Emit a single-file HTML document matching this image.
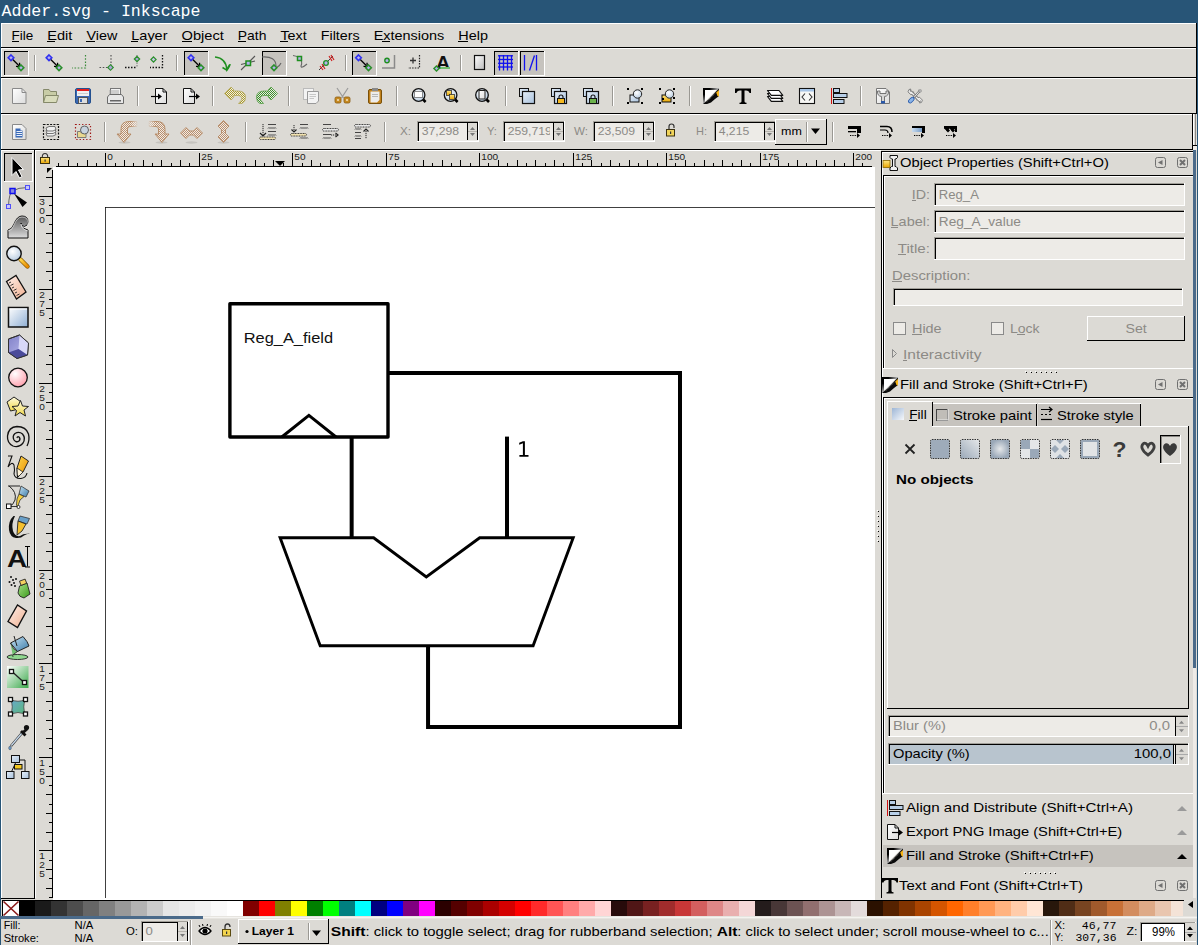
<!DOCTYPE html>
<html><head><meta charset="utf-8"><title>Adder.svg - Inkscape</title>
<style>html,body{margin:0;padding:0;background:#dcdad5;overflow:hidden;} svg{display:block;} text{white-space:pre;}</style>
</head><body>
<svg width="1198" height="945" viewBox="0 0 1198 945" shape-rendering="auto">
<rect x="0" y="0" width="1198" height="945" fill="#dcdad5" />
<rect x="0" y="0" width="1198" height="23" fill="#285577" />
<text x="1.50" y="16" font-family="Liberation Mono" font-size="16.60" fill="#fff" textLength="199.00" lengthAdjust="spacingAndGlyphs" >Adder.svg - Inkscape</text>
<rect x="0" y="23" width="1" height="922" fill="#285577" />
<rect x="1197" y="23" width="1" height="922" fill="#285577" />
<rect x="1" y="23" width="1196" height="25" fill="#dcdad5" />
<rect x="1" y="23" width="1196" height="1" fill="#fff" />
<rect x="1" y="23" width="1" height="25" fill="#fff" />
<rect x="1" y="47" width="1196" height="1" fill="#000" />
<rect x="1196" y="23" width="1" height="25" fill="#000" />
<text x="11.50" y="40" font-family="Liberation Sans" font-size="13.19" fill="#000" textLength="21.75" lengthAdjust="spacingAndGlyphs" >File</text>
<rect x="12" y="41" width="7" height="1" fill="#000" />
<text x="47.25" y="40" font-family="Liberation Sans" font-size="13.19" fill="#000" textLength="25.18" lengthAdjust="spacingAndGlyphs" >Edit</text>
<rect x="47" y="41" width="8" height="1" fill="#000" />
<text x="86.43" y="40" font-family="Liberation Sans" font-size="13.19" fill="#000" textLength="30.85" lengthAdjust="spacingAndGlyphs" >View</text>
<rect x="86" y="41" width="9" height="1" fill="#000" />
<text x="131.28" y="40" font-family="Liberation Sans" font-size="13.19" fill="#000" textLength="36.25" lengthAdjust="spacingAndGlyphs" >Layer</text>
<rect x="131" y="41" width="7" height="1" fill="#000" />
<text x="181.52" y="40" font-family="Liberation Sans" font-size="13.19" fill="#000" textLength="42.34" lengthAdjust="spacingAndGlyphs" >Object</text>
<rect x="182" y="41" width="10" height="1" fill="#000" />
<text x="237.86" y="40" font-family="Liberation Sans" font-size="13.19" fill="#000" textLength="28.56" lengthAdjust="spacingAndGlyphs" >Path</text>
<rect x="238" y="41" width="8" height="1" fill="#000" />
<text x="280.42" y="40" font-family="Liberation Sans" font-size="13.19" fill="#000" textLength="26.29" lengthAdjust="spacingAndGlyphs" >Text</text>
<rect x="280" y="41" width="8" height="1" fill="#000" />
<text x="320.72" y="40" font-family="Liberation Sans" font-size="13.19" fill="#000" textLength="38.97" lengthAdjust="spacingAndGlyphs" >Filters</text>
<rect x="353" y="41" width="7" height="1" fill="#000" />
<text x="373.69" y="40" font-family="Liberation Sans" font-size="13.19" fill="#000" textLength="70.59" lengthAdjust="spacingAndGlyphs" >Extensions</text>
<rect x="382" y="41" width="8" height="1" fill="#000" />
<text x="458.28" y="40" font-family="Liberation Sans" font-size="13.19" fill="#000" textLength="29.64" lengthAdjust="spacingAndGlyphs" >Help</text>
<rect x="458" y="41" width="10" height="1" fill="#000" />
<rect x="1" y="48" width="1196" height="30" fill="#dcdad5" />
<rect x="1" y="48" width="1196" height="1" fill="#fff" />
<rect x="1" y="48" width="1" height="30" fill="#fff" />
<rect x="1" y="77" width="1196" height="1" fill="#000" />
<rect x="1196" y="48" width="1" height="30" fill="#000" />
<rect x="1" y="78" width="1196" height="36" fill="#dcdad5" />
<rect x="1" y="78" width="1196" height="1" fill="#fff" />
<rect x="1" y="78" width="1" height="36" fill="#fff" />
<rect x="1" y="113" width="1196" height="1" fill="#000" />
<rect x="1196" y="78" width="1" height="36" fill="#000" />
<rect x="1" y="114" width="1192" height="36" fill="#dcdad5" />
<rect x="1" y="114" width="1192" height="1" fill="#fff" />
<rect x="1" y="114" width="1" height="36" fill="#fff" />
<rect x="1" y="149" width="1192" height="1" fill="#000" />
<rect x="1192" y="114" width="1" height="36" fill="#000" />
<rect x="1" y="150" width="34" height="748" fill="#dcdad5" />
<rect x="1" y="150" width="33" height="1" fill="#fff" />
<rect x="1" y="150" width="1" height="748" fill="#fff" />
<rect x="34" y="150" width="1" height="749" fill="#000" />
<rect x="1" y="898" width="34" height="1" fill="#000" />
<rect x="35" y="150" width="1" height="748" fill="#fff" />
<rect x="35" y="150" width="846" height="1" fill="#fff" />
<rect x="53" y="167" width="822" height="733" fill="#fff" />
<rect x="56" y="166" width="817" height="1" fill="#000" />
<rect x="52" y="170" width="1" height="728" fill="#000" />
<path d="M47 168 L52 168 L47 173 Z" fill="#000"/>
<rect x="58" y="163" width="1" height="3" fill="#000" />
<rect x="68" y="160" width="1" height="6" fill="#000" />
<rect x="77" y="163" width="1" height="3" fill="#000" />
<rect x="87" y="160" width="1" height="6" fill="#000" />
<rect x="96" y="163" width="1" height="3" fill="#000" />
<rect x="105" y="153" width="1" height="13" fill="#000" />
<text x="107.30" y="160" font-family="Liberation Sans" font-size="9.44" fill="#1a1a1a" textLength="5.60" lengthAdjust="spacingAndGlyphs" >0</text>
<rect x="115" y="163" width="1" height="3" fill="#000" />
<rect x="124" y="160" width="1" height="6" fill="#000" />
<rect x="133" y="163" width="1" height="3" fill="#000" />
<rect x="143" y="160" width="1" height="6" fill="#000" />
<rect x="152" y="163" width="1" height="3" fill="#000" />
<rect x="161" y="160" width="1" height="6" fill="#000" />
<rect x="171" y="163" width="1" height="3" fill="#000" />
<rect x="180" y="160" width="1" height="6" fill="#000" />
<rect x="189" y="163" width="1" height="3" fill="#000" />
<rect x="199" y="153" width="1" height="13" fill="#000" />
<text x="201.30" y="160" font-family="Liberation Sans" font-size="9.44" fill="#1a1a1a" textLength="11.20" lengthAdjust="spacingAndGlyphs" >25</text>
<rect x="208" y="163" width="1" height="3" fill="#000" />
<rect x="217" y="160" width="1" height="6" fill="#000" />
<rect x="227" y="163" width="1" height="3" fill="#000" />
<rect x="236" y="160" width="1" height="6" fill="#000" />
<rect x="245" y="163" width="1" height="3" fill="#000" />
<rect x="255" y="160" width="1" height="6" fill="#000" />
<rect x="264" y="163" width="1" height="3" fill="#000" />
<rect x="273" y="160" width="1" height="6" fill="#000" />
<rect x="283" y="163" width="1" height="3" fill="#000" />
<rect x="292" y="153" width="1" height="13" fill="#000" />
<text x="294.30" y="160" font-family="Liberation Sans" font-size="9.44" fill="#1a1a1a" textLength="11.20" lengthAdjust="spacingAndGlyphs" >50</text>
<rect x="302" y="163" width="1" height="3" fill="#000" />
<rect x="311" y="160" width="1" height="6" fill="#000" />
<rect x="320" y="163" width="1" height="3" fill="#000" />
<rect x="330" y="160" width="1" height="6" fill="#000" />
<rect x="339" y="163" width="1" height="3" fill="#000" />
<rect x="348" y="160" width="1" height="6" fill="#000" />
<rect x="358" y="163" width="1" height="3" fill="#000" />
<rect x="367" y="160" width="1" height="6" fill="#000" />
<rect x="376" y="163" width="1" height="3" fill="#000" />
<rect x="386" y="153" width="1" height="13" fill="#000" />
<text x="388.30" y="160" font-family="Liberation Sans" font-size="9.44" fill="#1a1a1a" textLength="11.20" lengthAdjust="spacingAndGlyphs" >75</text>
<rect x="395" y="163" width="1" height="3" fill="#000" />
<rect x="404" y="160" width="1" height="6" fill="#000" />
<rect x="414" y="163" width="1" height="3" fill="#000" />
<rect x="423" y="160" width="1" height="6" fill="#000" />
<rect x="432" y="163" width="1" height="3" fill="#000" />
<rect x="442" y="160" width="1" height="6" fill="#000" />
<rect x="451" y="163" width="1" height="3" fill="#000" />
<rect x="460" y="160" width="1" height="6" fill="#000" />
<rect x="470" y="163" width="1" height="3" fill="#000" />
<rect x="479" y="153" width="1" height="13" fill="#000" />
<text x="481.30" y="160" font-family="Liberation Sans" font-size="9.44" fill="#1a1a1a" textLength="16.80" lengthAdjust="spacingAndGlyphs" >100</text>
<rect x="488" y="163" width="1" height="3" fill="#000" />
<rect x="498" y="160" width="1" height="6" fill="#000" />
<rect x="507" y="163" width="1" height="3" fill="#000" />
<rect x="517" y="160" width="1" height="6" fill="#000" />
<rect x="526" y="163" width="1" height="3" fill="#000" />
<rect x="535" y="160" width="1" height="6" fill="#000" />
<rect x="545" y="163" width="1" height="3" fill="#000" />
<rect x="554" y="160" width="1" height="6" fill="#000" />
<rect x="563" y="163" width="1" height="3" fill="#000" />
<rect x="573" y="153" width="1" height="13" fill="#000" />
<text x="575.30" y="160" font-family="Liberation Sans" font-size="9.44" fill="#1a1a1a" textLength="16.80" lengthAdjust="spacingAndGlyphs" >125</text>
<rect x="582" y="163" width="1" height="3" fill="#000" />
<rect x="591" y="160" width="1" height="6" fill="#000" />
<rect x="601" y="163" width="1" height="3" fill="#000" />
<rect x="610" y="160" width="1" height="6" fill="#000" />
<rect x="619" y="163" width="1" height="3" fill="#000" />
<rect x="629" y="160" width="1" height="6" fill="#000" />
<rect x="638" y="163" width="1" height="3" fill="#000" />
<rect x="647" y="160" width="1" height="6" fill="#000" />
<rect x="657" y="163" width="1" height="3" fill="#000" />
<rect x="666" y="153" width="1" height="13" fill="#000" />
<text x="668.30" y="160" font-family="Liberation Sans" font-size="9.44" fill="#1a1a1a" textLength="16.80" lengthAdjust="spacingAndGlyphs" >150</text>
<rect x="675" y="163" width="1" height="3" fill="#000" />
<rect x="685" y="160" width="1" height="6" fill="#000" />
<rect x="694" y="163" width="1" height="3" fill="#000" />
<rect x="704" y="160" width="1" height="6" fill="#000" />
<rect x="713" y="163" width="1" height="3" fill="#000" />
<rect x="722" y="160" width="1" height="6" fill="#000" />
<rect x="732" y="163" width="1" height="3" fill="#000" />
<rect x="741" y="160" width="1" height="6" fill="#000" />
<rect x="750" y="163" width="1" height="3" fill="#000" />
<rect x="760" y="153" width="1" height="13" fill="#000" />
<text x="762.30" y="160" font-family="Liberation Sans" font-size="9.44" fill="#1a1a1a" textLength="16.80" lengthAdjust="spacingAndGlyphs" >175</text>
<rect x="769" y="163" width="1" height="3" fill="#000" />
<rect x="778" y="160" width="1" height="6" fill="#000" />
<rect x="788" y="163" width="1" height="3" fill="#000" />
<rect x="797" y="160" width="1" height="6" fill="#000" />
<rect x="806" y="163" width="1" height="3" fill="#000" />
<rect x="816" y="160" width="1" height="6" fill="#000" />
<rect x="825" y="163" width="1" height="3" fill="#000" />
<rect x="834" y="160" width="1" height="6" fill="#000" />
<rect x="844" y="163" width="1" height="3" fill="#000" />
<rect x="853" y="153" width="1" height="13" fill="#000" />
<text x="855.30" y="160" font-family="Liberation Sans" font-size="9.44" fill="#1a1a1a" textLength="16.80" lengthAdjust="spacingAndGlyphs" >200</text>
<rect x="862" y="163" width="1" height="3" fill="#000" />
<rect x="872" y="160" width="1" height="6" fill="#000" />
<rect x="46" y="177" width="6" height="1" fill="#000" />
<rect x="49" y="187" width="3" height="1" fill="#000" />
<rect x="39" y="196" width="13" height="1" fill="#000" />
<text x="39.30" y="205" font-family="Liberation Sans" font-size="9.44" fill="#1a1a1a" textLength="5.60" lengthAdjust="spacingAndGlyphs" >3</text>
<text x="39.30" y="214" font-family="Liberation Sans" font-size="9.44" fill="#1a1a1a" textLength="5.60" lengthAdjust="spacingAndGlyphs" >0</text>
<text x="39.30" y="223" font-family="Liberation Sans" font-size="9.44" fill="#1a1a1a" textLength="5.60" lengthAdjust="spacingAndGlyphs" >0</text>
<rect x="49" y="205" width="3" height="1" fill="#000" />
<rect x="46" y="215" width="6" height="1" fill="#000" />
<rect x="49" y="224" width="3" height="1" fill="#000" />
<rect x="46" y="233" width="6" height="1" fill="#000" />
<rect x="49" y="243" width="3" height="1" fill="#000" />
<rect x="46" y="252" width="6" height="1" fill="#000" />
<rect x="49" y="261" width="3" height="1" fill="#000" />
<rect x="46" y="271" width="6" height="1" fill="#000" />
<rect x="49" y="280" width="3" height="1" fill="#000" />
<rect x="39" y="289" width="13" height="1" fill="#000" />
<text x="39.30" y="298" font-family="Liberation Sans" font-size="9.44" fill="#1a1a1a" textLength="5.60" lengthAdjust="spacingAndGlyphs" >2</text>
<text x="39.30" y="307" font-family="Liberation Sans" font-size="9.44" fill="#1a1a1a" textLength="5.60" lengthAdjust="spacingAndGlyphs" >7</text>
<text x="39.30" y="316" font-family="Liberation Sans" font-size="9.44" fill="#1a1a1a" textLength="5.60" lengthAdjust="spacingAndGlyphs" >5</text>
<rect x="49" y="299" width="3" height="1" fill="#000" />
<rect x="46" y="308" width="6" height="1" fill="#000" />
<rect x="49" y="318" width="3" height="1" fill="#000" />
<rect x="46" y="327" width="6" height="1" fill="#000" />
<rect x="49" y="336" width="3" height="1" fill="#000" />
<rect x="46" y="346" width="6" height="1" fill="#000" />
<rect x="49" y="355" width="3" height="1" fill="#000" />
<rect x="46" y="364" width="6" height="1" fill="#000" />
<rect x="49" y="374" width="3" height="1" fill="#000" />
<rect x="39" y="383" width="13" height="1" fill="#000" />
<text x="39.30" y="392" font-family="Liberation Sans" font-size="9.44" fill="#1a1a1a" textLength="5.60" lengthAdjust="spacingAndGlyphs" >2</text>
<text x="39.30" y="401" font-family="Liberation Sans" font-size="9.44" fill="#1a1a1a" textLength="5.60" lengthAdjust="spacingAndGlyphs" >5</text>
<text x="39.30" y="410" font-family="Liberation Sans" font-size="9.44" fill="#1a1a1a" textLength="5.60" lengthAdjust="spacingAndGlyphs" >0</text>
<rect x="49" y="392" width="3" height="1" fill="#000" />
<rect x="46" y="402" width="6" height="1" fill="#000" />
<rect x="49" y="411" width="3" height="1" fill="#000" />
<rect x="46" y="420" width="6" height="1" fill="#000" />
<rect x="49" y="430" width="3" height="1" fill="#000" />
<rect x="46" y="439" width="6" height="1" fill="#000" />
<rect x="49" y="448" width="3" height="1" fill="#000" />
<rect x="46" y="458" width="6" height="1" fill="#000" />
<rect x="49" y="467" width="3" height="1" fill="#000" />
<rect x="39" y="476" width="13" height="1" fill="#000" />
<text x="39.30" y="485" font-family="Liberation Sans" font-size="9.44" fill="#1a1a1a" textLength="5.60" lengthAdjust="spacingAndGlyphs" >2</text>
<text x="39.30" y="494" font-family="Liberation Sans" font-size="9.44" fill="#1a1a1a" textLength="5.60" lengthAdjust="spacingAndGlyphs" >2</text>
<text x="39.30" y="503" font-family="Liberation Sans" font-size="9.44" fill="#1a1a1a" textLength="5.60" lengthAdjust="spacingAndGlyphs" >5</text>
<rect x="49" y="486" width="3" height="1" fill="#000" />
<rect x="46" y="495" width="6" height="1" fill="#000" />
<rect x="49" y="505" width="3" height="1" fill="#000" />
<rect x="46" y="514" width="6" height="1" fill="#000" />
<rect x="49" y="523" width="3" height="1" fill="#000" />
<rect x="46" y="533" width="6" height="1" fill="#000" />
<rect x="49" y="542" width="3" height="1" fill="#000" />
<rect x="46" y="551" width="6" height="1" fill="#000" />
<rect x="49" y="561" width="3" height="1" fill="#000" />
<rect x="39" y="570" width="13" height="1" fill="#000" />
<text x="39.30" y="579" font-family="Liberation Sans" font-size="9.44" fill="#1a1a1a" textLength="5.60" lengthAdjust="spacingAndGlyphs" >2</text>
<text x="39.30" y="588" font-family="Liberation Sans" font-size="9.44" fill="#1a1a1a" textLength="5.60" lengthAdjust="spacingAndGlyphs" >0</text>
<text x="39.30" y="597" font-family="Liberation Sans" font-size="9.44" fill="#1a1a1a" textLength="5.60" lengthAdjust="spacingAndGlyphs" >0</text>
<rect x="49" y="579" width="3" height="1" fill="#000" />
<rect x="46" y="589" width="6" height="1" fill="#000" />
<rect x="49" y="598" width="3" height="1" fill="#000" />
<rect x="46" y="607" width="6" height="1" fill="#000" />
<rect x="49" y="617" width="3" height="1" fill="#000" />
<rect x="46" y="626" width="6" height="1" fill="#000" />
<rect x="49" y="635" width="3" height="1" fill="#000" />
<rect x="46" y="645" width="6" height="1" fill="#000" />
<rect x="49" y="654" width="3" height="1" fill="#000" />
<rect x="39" y="663" width="13" height="1" fill="#000" />
<text x="39.30" y="672" font-family="Liberation Sans" font-size="9.44" fill="#1a1a1a" textLength="5.60" lengthAdjust="spacingAndGlyphs" >1</text>
<text x="39.30" y="681" font-family="Liberation Sans" font-size="9.44" fill="#1a1a1a" textLength="5.60" lengthAdjust="spacingAndGlyphs" >7</text>
<text x="39.30" y="690" font-family="Liberation Sans" font-size="9.44" fill="#1a1a1a" textLength="5.60" lengthAdjust="spacingAndGlyphs" >5</text>
<rect x="49" y="673" width="3" height="1" fill="#000" />
<rect x="46" y="682" width="6" height="1" fill="#000" />
<rect x="49" y="691" width="3" height="1" fill="#000" />
<rect x="46" y="701" width="6" height="1" fill="#000" />
<rect x="49" y="710" width="3" height="1" fill="#000" />
<rect x="46" y="720" width="6" height="1" fill="#000" />
<rect x="49" y="729" width="3" height="1" fill="#000" />
<rect x="46" y="738" width="6" height="1" fill="#000" />
<rect x="49" y="748" width="3" height="1" fill="#000" />
<rect x="39" y="757" width="13" height="1" fill="#000" />
<text x="39.30" y="766" font-family="Liberation Sans" font-size="9.44" fill="#1a1a1a" textLength="5.60" lengthAdjust="spacingAndGlyphs" >1</text>
<text x="39.30" y="775" font-family="Liberation Sans" font-size="9.44" fill="#1a1a1a" textLength="5.60" lengthAdjust="spacingAndGlyphs" >5</text>
<text x="39.30" y="784" font-family="Liberation Sans" font-size="9.44" fill="#1a1a1a" textLength="5.60" lengthAdjust="spacingAndGlyphs" >0</text>
<rect x="49" y="766" width="3" height="1" fill="#000" />
<rect x="46" y="776" width="6" height="1" fill="#000" />
<rect x="49" y="785" width="3" height="1" fill="#000" />
<rect x="46" y="794" width="6" height="1" fill="#000" />
<rect x="49" y="804" width="3" height="1" fill="#000" />
<rect x="46" y="813" width="6" height="1" fill="#000" />
<rect x="49" y="822" width="3" height="1" fill="#000" />
<rect x="46" y="832" width="6" height="1" fill="#000" />
<rect x="49" y="841" width="3" height="1" fill="#000" />
<rect x="39" y="850" width="13" height="1" fill="#000" />
<text x="39.30" y="859" font-family="Liberation Sans" font-size="9.44" fill="#1a1a1a" textLength="5.60" lengthAdjust="spacingAndGlyphs" >1</text>
<text x="39.30" y="868" font-family="Liberation Sans" font-size="9.44" fill="#1a1a1a" textLength="5.60" lengthAdjust="spacingAndGlyphs" >2</text>
<text x="39.30" y="877" font-family="Liberation Sans" font-size="9.44" fill="#1a1a1a" textLength="5.60" lengthAdjust="spacingAndGlyphs" >5</text>
<rect x="49" y="860" width="3" height="1" fill="#000" />
<rect x="46" y="869" width="6" height="1" fill="#000" />
<rect x="49" y="878" width="3" height="1" fill="#000" />
<rect x="46" y="888" width="6" height="1" fill="#000" />
<rect x="49" y="897" width="3" height="1" fill="#000" />
<path d="M275 161 L285 161 L280 166 Z" fill="#000"/>
<rect x="105" y="207" width="770" height="1" fill="#000" opacity="0.75"/>
<rect x="105" y="207" width="1" height="691" fill="#000" opacity="0.75"/>
<g fill="none" stroke="#000" stroke-linejoin="miter">
<path d="M351.65 437 V537.5" stroke-width="4"/>
<path d="M507 436.6 V537.5" stroke-width="4"/>
<path d="M388 373 H680 V726.9 H428.05 V645.7" stroke-width="4"/>
<rect x="229.9" y="303.8" width="158.1" height="133.2" stroke-width="3.4" stroke-linejoin="round"/>
<path d="M281.8 437 L308.9 415.3 L336 437" stroke-width="3"/>
<path d="M280.1 537.8 H373.6 L426.3 577 L479.7 537.8 H573.2 L533.1 645.7 H320.2 Z" stroke-width="2.9"/>
</g>
<text x="243.70" y="342.9" font-family="Liberation Sans" font-size="15.53" fill="#111" textLength="89.40" lengthAdjust="spacingAndGlyphs" >Reg_A_field</text>
<path d="M522.9 441.3 H524.9 V455.1 H528.5 V456.7 H519.4 V455.1 H522.9 V443.3 L519.2 444.7 V442.8 L522.9 441.3 Z" fill="#000"/>
<rect x="875" y="150" width="6" height="748" fill="#dcdad5" />
<rect x="872" y="150" width="9" height="17" fill="#dcdad5" />
<rect x="877" y="510" width="1" height="1" fill="#fff" />
<rect x="878" y="511" width="1" height="1" fill="#000" />
<rect x="877" y="515" width="1" height="1" fill="#fff" />
<rect x="878" y="516" width="1" height="1" fill="#000" />
<rect x="877" y="520" width="1" height="1" fill="#fff" />
<rect x="878" y="521" width="1" height="1" fill="#000" />
<rect x="877" y="525" width="1" height="1" fill="#fff" />
<rect x="878" y="526" width="1" height="1" fill="#000" />
<rect x="877" y="530" width="1" height="1" fill="#fff" />
<rect x="878" y="531" width="1" height="1" fill="#000" />
<rect x="877" y="535" width="1" height="1" fill="#fff" />
<rect x="878" y="536" width="1" height="1" fill="#000" />
<rect x="877" y="540" width="1" height="1" fill="#fff" />
<rect x="878" y="541" width="1" height="1" fill="#000" />
<rect x="1193" y="146" width="4" height="752" fill="#eeebe7" />
<rect x="1193" y="140" width="4" height="6" fill="#eeebe7" />
<rect x="1193" y="145" width="4" height="1" fill="#000" />
<rect x="1193" y="150" width="3" height="518" fill="#4a6a8a" />
<rect x="1196" y="150" width="1" height="748" fill="#dcdad5" />
<rect x="881" y="151" width="312" height="1" fill="#000" />
<rect x="881" y="151" width="1" height="644" fill="#000" />
<rect x="882" y="152" width="311" height="1" fill="#fff" />
<rect x="882" y="152" width="1" height="643" fill="#fff" />
<text x="900.00" y="167" font-family="Liberation Sans" font-size="13.19" fill="#000" textLength="208.80" lengthAdjust="spacingAndGlyphs" >Object Properties (Shift+Ctrl+O)</text>
<rect x="1155.5" y="157.5" width="10" height="10" rx="2" fill="none" stroke="#707070" stroke-width="1"/>
<path d="M1158 162.5 L1162.5 160 L1162.5 165 Z" fill="#707070"/>
<rect x="1177.5" y="157.5" width="10" height="10" rx="2" fill="none" stroke="#707070" stroke-width="1"/>
<path d="M1180 160 L1185 165 M1185 160 L1180 165" stroke="#707070" stroke-width="2"/>
<rect x="883" y="175" width="310" height="1" fill="#000" />
<rect x="883" y="175" width="1" height="193" fill="#000" />
<rect x="884" y="176" width="309" height="1" fill="#fff" />
<rect x="884" y="176" width="1" height="192" fill="#fff" />
<rect x="934" y="183" width="251" height="23" fill="#edebe7" />
<rect x="934" y="183" width="251" height="1" fill="#a19f99" />
<rect x="934" y="183" width="1" height="23" fill="#a19f99" />
<rect x="935" y="184" width="249" height="1" fill="#000" />
<rect x="935" y="184" width="1" height="21" fill="#000" />
<rect x="934" y="205" width="251" height="1" fill="#fff" />
<rect x="1184" y="183" width="1" height="23" fill="#fff" />
<rect x="934" y="210" width="251" height="23" fill="#edebe7" />
<rect x="934" y="210" width="251" height="1" fill="#a19f99" />
<rect x="934" y="210" width="1" height="23" fill="#a19f99" />
<rect x="935" y="211" width="249" height="1" fill="#000" />
<rect x="935" y="211" width="1" height="21" fill="#000" />
<rect x="934" y="232" width="251" height="1" fill="#fff" />
<rect x="1184" y="210" width="1" height="23" fill="#fff" />
<rect x="934" y="237" width="251" height="23" fill="#edebe7" />
<rect x="934" y="237" width="251" height="1" fill="#a19f99" />
<rect x="934" y="237" width="1" height="23" fill="#a19f99" />
<rect x="935" y="238" width="249" height="1" fill="#000" />
<rect x="935" y="238" width="1" height="21" fill="#000" />
<rect x="934" y="259" width="251" height="1" fill="#fff" />
<rect x="1184" y="237" width="1" height="23" fill="#fff" />
<text x="911.78" y="199" font-family="Liberation Sans" font-size="13.19" fill="#8c8a86" textLength="18.22" lengthAdjust="spacingAndGlyphs" >ID:</text>
<text x="890.55" y="226" font-family="Liberation Sans" font-size="13.19" fill="#8c8a86" textLength="39.45" lengthAdjust="spacingAndGlyphs" >Label:</text>
<text x="897.76" y="253" font-family="Liberation Sans" font-size="13.19" fill="#8c8a86" textLength="32.24" lengthAdjust="spacingAndGlyphs" >Title:</text>
<text x="938.80" y="199" font-family="Liberation Sans" font-size="13.19" fill="#8c8a86" textLength="40.09" lengthAdjust="spacingAndGlyphs" >Reg_A</text>
<text x="938.80" y="226" font-family="Liberation Sans" font-size="13.19" fill="#8c8a86" textLength="82.10" lengthAdjust="spacingAndGlyphs" >Reg_A_value</text>
<text x="892.00" y="280" font-family="Liberation Sans" font-size="13.19" fill="#8c8a86" textLength="78.42" lengthAdjust="spacingAndGlyphs" >Description:</text>
<rect x="893" y="288" width="290" height="18" fill="#edebe7" />
<rect x="893" y="288" width="290" height="1" fill="#a19f99" />
<rect x="893" y="288" width="1" height="18" fill="#a19f99" />
<rect x="894" y="289" width="288" height="1" fill="#000" />
<rect x="894" y="289" width="1" height="16" fill="#000" />
<rect x="893" y="305" width="290" height="1" fill="#fff" />
<rect x="1182" y="288" width="1" height="18" fill="#fff" />
<rect x="893.5" y="322.5" width="12" height="12" fill="#edebe7" stroke="#8a8a8a" stroke-width="1"/>
<rect x="991.5" y="322.5" width="12" height="12" fill="#edebe7" stroke="#8a8a8a" stroke-width="1"/>
<text x="912.00" y="333" font-family="Liberation Sans" font-size="13.19" fill="#8c8a86" textLength="29.64" lengthAdjust="spacingAndGlyphs" >Hide</text>
<text x="1010.00" y="333" font-family="Liberation Sans" font-size="13.19" fill="#8c8a86" textLength="29.64" lengthAdjust="spacingAndGlyphs" >Lock</text>
<path d="M892.5 349.5 L896.5 353.5 L892.5 357.5 Z" fill="none" stroke="#8a8a8a" stroke-width="1"/>
<text x="903.00" y="359" font-family="Liberation Sans" font-size="13.19" fill="#8c8a86" textLength="78.43" lengthAdjust="spacingAndGlyphs" >Interactivity</text>
<rect x="912" y="200" width="4" height="1" fill="#8c8a86" />
<rect x="891" y="227" width="7" height="1" fill="#8c8a86" />
<rect x="898" y="254" width="8" height="1" fill="#8c8a86" />
<rect x="892" y="281" width="10" height="1" fill="#8c8a86" />
<rect x="912" y="334" width="10" height="1" fill="#8c8a86" />
<rect x="1017" y="334" width="8" height="1" fill="#8c8a86" />
<rect x="903" y="360" width="4" height="1" fill="#8c8a86" />
<rect x="1125" y="334" width="8" height="1" fill="#8c8a86" />
<rect x="1087" y="316" width="98" height="25" fill="#dcdad5" />
<rect x="1087" y="316" width="98" height="1" fill="#fff" />
<rect x="1087" y="316" width="1" height="25" fill="#fff" />
<rect x="1087" y="340" width="98" height="1" fill="#000" />
<rect x="1184" y="316" width="1" height="25" fill="#000" />
<text x="1125.40" y="333" font-family="Liberation Sans" font-size="13.19" fill="#8c8a86" textLength="21.35" lengthAdjust="spacingAndGlyphs" >Set</text>
<rect x="882" y="368" width="311" height="1" fill="#fff" />
<rect x="1025" y="371" width="1" height="1" fill="#fff" />
<rect x="1026" y="372" width="1" height="1" fill="#000" />
<rect x="1030" y="371" width="1" height="1" fill="#fff" />
<rect x="1031" y="372" width="1" height="1" fill="#000" />
<rect x="1035" y="371" width="1" height="1" fill="#fff" />
<rect x="1036" y="372" width="1" height="1" fill="#000" />
<rect x="1040" y="371" width="1" height="1" fill="#fff" />
<rect x="1041" y="372" width="1" height="1" fill="#000" />
<rect x="1045" y="371" width="1" height="1" fill="#fff" />
<rect x="1046" y="372" width="1" height="1" fill="#000" />
<rect x="1050" y="371" width="1" height="1" fill="#fff" />
<rect x="1051" y="372" width="1" height="1" fill="#000" />
<rect x="1055" y="371" width="1" height="1" fill="#fff" />
<rect x="1056" y="372" width="1" height="1" fill="#000" />
<text x="900.00" y="389" font-family="Liberation Sans" font-size="13.19" fill="#000" textLength="187.74" lengthAdjust="spacingAndGlyphs" >Fill and Stroke (Shift+Ctrl+F)</text>
<rect x="1155.5" y="379.5" width="10" height="10" rx="2" fill="none" stroke="#707070" stroke-width="1"/>
<path d="M1158 384.5 L1162.5 382 L1162.5 387 Z" fill="#707070"/>
<rect x="1177.5" y="379.5" width="10" height="10" rx="2" fill="none" stroke="#707070" stroke-width="1"/>
<path d="M1180 382 L1185 387 M1185 382 L1180 387" stroke="#707070" stroke-width="2"/>
<rect x="883" y="397" width="310" height="1" fill="#000" />
<rect x="883" y="397" width="1" height="396" fill="#000" />
<rect x="884" y="398" width="309" height="1" fill="#fff" />
<rect x="884" y="398" width="1" height="395" fill="#fff" />
<rect x="933" y="403" width="104" height="1" fill="#fff" />
<rect x="933" y="404" width="104" height="22" fill="#c6c3be" />
<rect x="1036" y="404" width="1" height="22" fill="#000" />
<rect x="1038" y="403" width="103" height="1" fill="#fff" />
<rect x="1038" y="404" width="103" height="22" fill="#c6c3be" />
<rect x="1140" y="404" width="1" height="22" fill="#000" />
<rect x="887" y="401" width="45" height="1" fill="#fff" />
<rect x="887" y="401" width="1" height="307" fill="#fff" />
<rect x="932" y="402" width="1" height="24" fill="#000" />
<rect x="932" y="426" width="257" height="1" fill="#fff" />
<rect x="1188" y="426" width="1" height="283" fill="#000" />
<rect x="887" y="708" width="302" height="1" fill="#000" />
<defs><linearGradient id="gfill" x1="0" y1="0" x2="1" y2="1"><stop offset="0" stop-color="#9db6d6"/><stop offset="1" stop-color="#f6f8fb"/></linearGradient><pattern id="dith" width="2" height="2" patternUnits="userSpaceOnUse"><rect width="2" height="2" fill="#dcdad5"/><rect width="1" height="1" fill="#222"/><rect x="1" y="1" width="1" height="1" fill="#222"/></pattern></defs>
<rect x="892" y="408" width="12" height="12" fill="url(#gfill)" />
<text x="909.30" y="419" font-family="Liberation Sans" font-size="13.19" fill="#000" textLength="17.37" lengthAdjust="spacingAndGlyphs" >Fill</text>
<rect x="909" y="420" width="8" height="1" fill="#000" />
<rect x="936.5" y="409.5" width="11" height="11" fill="#c0bdb8" stroke="#444" stroke-width="1"/>
<path d="M937 420 H948 V409" stroke="#eee" stroke-width="1" fill="none"/>
<text x="953.00" y="420" font-family="Liberation Sans" font-size="13.19" fill="#000" textLength="78.73" lengthAdjust="spacingAndGlyphs" >Stroke paint</text>
<g stroke="#000" stroke-width="1.2" fill="none"><path d="M1041 409.5 H1052 M1049 407 L1052 409.5 L1049 412"/><path d="M1041 414.5 H1043 M1045 414.5 H1047 M1049 414.5 H1051"/><path d="M1041 419.5 H1052"/></g>
<text x="1057.00" y="420" font-family="Liberation Sans" font-size="13.19" fill="#000" textLength="76.73" lengthAdjust="spacingAndGlyphs" >Stroke style</text>
<path d="M905.5 444.5 L914.5 453.5 M914.5 444.5 L905.5 453.5" stroke="#222" stroke-width="1.8"/>
<rect x="930.5" y="439.5" width="19" height="19" rx="1.5" fill="#9eabba" stroke="#333" stroke-width="1" stroke-dasharray="1.5 1"/>
<defs><linearGradient id="lg960" x1="0" y1="1" x2="1" y2="0"><stop offset="0" stop-color="#9aa8b8"/><stop offset="1" stop-color="#e6e8ea"/></linearGradient></defs>
<rect x="960.5" y="439.5" width="19" height="19" rx="1.5" fill="url(#lg960)" stroke="#333" stroke-width="1" stroke-dasharray="1.5 1"/>
<defs><radialGradient id="rg990"><stop offset="0" stop-color="#e6e8ea"/><stop offset="1" stop-color="#9aa8b8"/></radialGradient></defs>
<rect x="990.5" y="439.5" width="19" height="19" rx="1.5" fill="url(#rg990)" stroke="#333" stroke-width="1" stroke-dasharray="1.5 1"/>
<rect x="1020.5" y="439.5" width="19" height="19" rx="1.5" fill="#e4e6e8" stroke="#333" stroke-width="1" stroke-dasharray="1.5 1"/>
<rect x="1021" y="440" width="9" height="9" fill="#9aa8b8" />
<rect x="1030" y="449" width="9" height="9" fill="#9aa8b8" />
<rect x="1050.5" y="439.5" width="19" height="19" rx="1.5" fill="#dfe2e5" stroke="#333" stroke-width="1" stroke-dasharray="1.5 1"/>
<path d="M1051 449 L1055 445 L1059 449 L1055 453 Z M1061 449 L1065 445 L1069 449 L1065 453 Z M1056 440 L1060 444 L1064 440 Z M1056 458 L1060 454 L1064 458 Z" fill="#9aa8b8"/>
<rect x="1080.5" y="439.5" width="19" height="19" rx="1.5" fill="#9aa8b8" stroke="#333" stroke-width="1" stroke-dasharray="1.5 1"/>
<rect x="1083" y="442" width="14" height="14" fill="#e2e4e6" />
<text x="1112.5" y="456.5" font-family="Liberation Sans" font-weight="bold" font-size="22" fill="#3a3a3a" textLength="14" lengthAdjust="spacingAndGlyphs">?</text>
<path d="M1148 455 C1141 450 1141 446 1143 444 C1145 442 1147 444 1148 446 C1149 444 1151 442 1153 444 C1155 446 1155 450 1148 455 Z" fill="none" stroke="#404040" stroke-width="2.8"/>
<rect x="1160" y="435" width="21" height="29" fill="#dcdad5" />
<rect x="1160" y="435" width="21" height="1" fill="#000" />
<rect x="1160" y="435" width="1" height="29" fill="#000" />
<rect x="1161" y="436" width="19" height="1" fill="#8a8884" />
<rect x="1161" y="436" width="1" height="27" fill="#8a8884" />
<rect x="1160" y="463" width="21" height="1" fill="#fff" />
<rect x="1180" y="435" width="1" height="29" fill="#fff" />
<path d="M1170 456 C1163 451 1162 447 1164 444.5 C1166 442 1169 443.5 1170 446 C1171 443.5 1174 442 1176 444.5 C1178 447 1177 451 1170 456 Z" fill="#3a3a3a"/>
<text x="896.00" y="484" font-family="Liberation Sans" font-size="13.19" fill="#000" font-weight="bold" textLength="77.51" lengthAdjust="spacingAndGlyphs" >No objects</text>
<rect x="888" y="715" width="301" height="22" fill="#edebe7" />
<rect x="888" y="715" width="301" height="1" fill="#a19f99" />
<rect x="888" y="715" width="1" height="22" fill="#a19f99" />
<rect x="889" y="716" width="299" height="1" fill="#000" />
<rect x="889" y="716" width="1" height="20" fill="#000" />
<rect x="888" y="736" width="301" height="1" fill="#fff" />
<rect x="1188" y="715" width="1" height="22" fill="#fff" />
<rect x="1175" y="717" width="13" height="19" fill="#dcdad5" />
<rect x="1175" y="717" width="1" height="19" fill="#000" />
<path d="M1179 723.75 L1181.5 720.75 L1184 723.75 Z" fill="#888"/>
<path d="M1179 729.25 L1181.5 732.25 L1184 729.25 Z" fill="#888"/>
<rect x="1176" y="726" width="12" height="1" fill="#aaa" />
<text x="893.00" y="730" font-family="Liberation Sans" font-size="13.19" fill="#8c8a86" textLength="52.74" lengthAdjust="spacingAndGlyphs" >Blur (%)</text>
<text x="1149.32" y="730" font-family="Liberation Sans" font-size="13.19" fill="#8c8a86" textLength="20.68" lengthAdjust="spacingAndGlyphs" >0,0</text>
<rect x="888" y="743" width="301" height="22" fill="#edebe7" />
<rect x="888" y="743" width="301" height="1" fill="#a19f99" />
<rect x="888" y="743" width="1" height="22" fill="#a19f99" />
<rect x="889" y="744" width="299" height="1" fill="#000" />
<rect x="889" y="744" width="1" height="20" fill="#000" />
<rect x="888" y="764" width="301" height="1" fill="#fff" />
<rect x="1188" y="743" width="1" height="22" fill="#fff" />
<rect x="890" y="745" width="283" height="19" fill="#b8c4ce" />
<rect x="1173" y="745" width="1" height="19" fill="#000" />
<rect x="1175" y="745" width="13" height="19" fill="#dcdad5" />
<rect x="1175" y="745" width="1" height="19" fill="#000" />
<path d="M1179 751.75 L1181.5 748.75 L1184 751.75 Z" fill="#888"/>
<path d="M1179 757.25 L1181.5 760.25 L1184 757.25 Z" fill="#888"/>
<rect x="1176" y="754" width="12" height="1" fill="#aaa" />
<text x="893.00" y="758" font-family="Liberation Sans" font-size="13.19" fill="#000" textLength="76.63" lengthAdjust="spacingAndGlyphs" >Opacity (%)</text>
<text x="1133.78" y="758" font-family="Liberation Sans" font-size="13.19" fill="#000" textLength="37.22" lengthAdjust="spacingAndGlyphs" >100,0</text>
<rect x="882" y="793" width="311" height="1" fill="#fff" />
<rect x="883" y="845" width="310" height="22" fill="#c6c3be" />
<text x="906.00" y="812" font-family="Liberation Sans" font-size="13.19" fill="#000" textLength="227.00" lengthAdjust="spacingAndGlyphs" >Align and Distribute (Shift+Ctrl+A)</text>
<text x="906.00" y="836" font-family="Liberation Sans" font-size="13.19" fill="#000" textLength="216.13" lengthAdjust="spacingAndGlyphs" >Export PNG Image (Shift+Ctrl+E)</text>
<text x="906.00" y="860" font-family="Liberation Sans" font-size="13.19" fill="#000" textLength="187.74" lengthAdjust="spacingAndGlyphs" >Fill and Stroke (Shift+Ctrl+F)</text>
<path d="M1177 811 L1182 806 L1187 811 Z" fill="#9a9a9a"/>
<path d="M1177 835 L1182 830 L1187 835 Z" fill="#9a9a9a"/>
<path d="M1177 859 L1182 854 L1187 859 Z" fill="#000"/>
<rect x="1024" y="872" width="1" height="1" fill="#fff" />
<rect x="1025" y="873" width="1" height="1" fill="#000" />
<rect x="1029" y="872" width="1" height="1" fill="#fff" />
<rect x="1030" y="873" width="1" height="1" fill="#000" />
<rect x="1034" y="872" width="1" height="1" fill="#fff" />
<rect x="1035" y="873" width="1" height="1" fill="#000" />
<rect x="1039" y="872" width="1" height="1" fill="#fff" />
<rect x="1040" y="873" width="1" height="1" fill="#000" />
<rect x="1044" y="872" width="1" height="1" fill="#fff" />
<rect x="1045" y="873" width="1" height="1" fill="#000" />
<rect x="1049" y="872" width="1" height="1" fill="#fff" />
<rect x="1050" y="873" width="1" height="1" fill="#000" />
<rect x="1054" y="872" width="1" height="1" fill="#fff" />
<rect x="1055" y="873" width="1" height="1" fill="#000" />
<text x="899.00" y="890" font-family="Liberation Sans" font-size="13.19" fill="#000" textLength="184.00" lengthAdjust="spacingAndGlyphs" >Text and Font (Shift+Ctrl+T)</text>
<rect x="1155.5" y="880.5" width="10" height="10" rx="2" fill="none" stroke="#707070" stroke-width="1"/>
<path d="M1158 885.5 L1162.5 883 L1162.5 888 Z" fill="#707070"/>
<rect x="1177.5" y="880.5" width="10" height="10" rx="2" fill="none" stroke="#707070" stroke-width="1"/>
<path d="M1180 883 L1185 888 M1185 883 L1180 888" stroke="#707070" stroke-width="2"/>
<rect x="1" y="900" width="1196" height="16" fill="#dcdad5" />
<rect x="2" y="900" width="1182" height="1" fill="#000" />
<rect x="2" y="900" width="1" height="16" fill="#000" />
<rect x="3" y="901" width="16" height="15" fill="#fff"/>
<path d="M3.5 901.5 L18.5 915.5 M18.5 901.5 L3.5 915.5" stroke="#8b1a1a" stroke-width="1.6"/>
<rect x="19" y="901" width="16" height="15" fill="#000000" />
<rect x="35" y="901" width="16" height="15" fill="#1a1a1a" />
<rect x="51" y="901" width="16" height="15" fill="#333333" />
<rect x="67" y="901" width="16" height="15" fill="#4d4d4d" />
<rect x="83" y="901" width="16" height="15" fill="#666666" />
<rect x="99" y="901" width="16" height="15" fill="#808080" />
<rect x="115" y="901" width="16" height="15" fill="#999999" />
<rect x="131" y="901" width="16" height="15" fill="#b3b3b3" />
<rect x="147" y="901" width="16" height="15" fill="#cccccc" />
<rect x="163" y="901" width="16" height="15" fill="#e6e6e6" />
<rect x="179" y="901" width="16" height="15" fill="#ececec" />
<rect x="195" y="901" width="16" height="15" fill="#f2f2f2" />
<rect x="211" y="901" width="16" height="15" fill="#f9f9f9" />
<rect x="227" y="901" width="16" height="15" fill="#ffffff" />
<rect x="243" y="901" width="16" height="15" fill="#800000" />
<rect x="259" y="901" width="16" height="15" fill="#ff0000" />
<rect x="275" y="901" width="16" height="15" fill="#808000" />
<rect x="291" y="901" width="16" height="15" fill="#ffff00" />
<rect x="307" y="901" width="16" height="15" fill="#008000" />
<rect x="323" y="901" width="16" height="15" fill="#00ff00" />
<rect x="339" y="901" width="16" height="15" fill="#008080" />
<rect x="355" y="901" width="16" height="15" fill="#00ffff" />
<rect x="371" y="901" width="16" height="15" fill="#000080" />
<rect x="387" y="901" width="16" height="15" fill="#0000ff" />
<rect x="403" y="901" width="16" height="15" fill="#800080" />
<rect x="419" y="901" width="16" height="15" fill="#ff00ff" />
<rect x="435" y="901" width="16" height="15" fill="#2b0000" />
<rect x="451" y="901" width="16" height="15" fill="#550000" />
<rect x="467" y="901" width="16" height="15" fill="#800000" />
<rect x="483" y="901" width="16" height="15" fill="#aa0000" />
<rect x="499" y="901" width="16" height="15" fill="#d40000" />
<rect x="515" y="901" width="16" height="15" fill="#ff0000" />
<rect x="531" y="901" width="16" height="15" fill="#ff2a2a" />
<rect x="547" y="901" width="16" height="15" fill="#ff5555" />
<rect x="563" y="901" width="16" height="15" fill="#ff8080" />
<rect x="579" y="901" width="16" height="15" fill="#ffaaaa" />
<rect x="595" y="901" width="16" height="15" fill="#ffd5d5" />
<rect x="611" y="901" width="16" height="15" fill="#280b0b" />
<rect x="627" y="901" width="16" height="15" fill="#501616" />
<rect x="643" y="901" width="16" height="15" fill="#782121" />
<rect x="659" y="901" width="16" height="15" fill="#a02c2c" />
<rect x="675" y="901" width="16" height="15" fill="#c83737" />
<rect x="691" y="901" width="16" height="15" fill="#d35f5f" />
<rect x="707" y="901" width="16" height="15" fill="#de8787" />
<rect x="723" y="901" width="16" height="15" fill="#e9afaf" />
<rect x="739" y="901" width="16" height="15" fill="#f4d7d7" />
<rect x="755" y="901" width="16" height="15" fill="#241c1c" />
<rect x="771" y="901" width="16" height="15" fill="#483737" />
<rect x="787" y="901" width="16" height="15" fill="#6c5353" />
<rect x="803" y="901" width="16" height="15" fill="#916f6f" />
<rect x="819" y="901" width="16" height="15" fill="#ac9393" />
<rect x="835" y="901" width="16" height="15" fill="#c8b7b7" />
<rect x="851" y="901" width="16" height="15" fill="#e3dbdb" />
<rect x="867" y="901" width="16" height="15" fill="#2b1100" />
<rect x="883" y="901" width="16" height="15" fill="#552200" />
<rect x="899" y="901" width="16" height="15" fill="#803300" />
<rect x="915" y="901" width="16" height="15" fill="#aa4400" />
<rect x="931" y="901" width="16" height="15" fill="#d45500" />
<rect x="947" y="901" width="16" height="15" fill="#ff6600" />
<rect x="963" y="901" width="16" height="15" fill="#ff7f2a" />
<rect x="979" y="901" width="16" height="15" fill="#ff9955" />
<rect x="995" y="901" width="16" height="15" fill="#ffb380" />
<rect x="1011" y="901" width="16" height="15" fill="#ffccaa" />
<rect x="1027" y="901" width="16" height="15" fill="#ffe6d5" />
<rect x="1043" y="901" width="16" height="15" fill="#28170b" />
<rect x="1059" y="901" width="16" height="15" fill="#502d16" />
<rect x="1075" y="901" width="16" height="15" fill="#784421" />
<rect x="1091" y="901" width="16" height="15" fill="#a05a2c" />
<rect x="1107" y="901" width="16" height="15" fill="#c87137" />
<rect x="1123" y="901" width="16" height="15" fill="#d38d5f" />
<rect x="1139" y="901" width="16" height="15" fill="#deaa87" />
<rect x="1155" y="901" width="16" height="15" fill="#e9c6af" />
<rect x="1171" y="901" width="12" height="15" fill="#f4e3d7" />
<path d="M1188 904.5 L1193 901 L1193 908 Z" fill="#000"/>
<rect x="203" y="916" width="994" height="3" fill="#e6e4df" />
<rect x="203" y="917" width="994" height="1" fill="#f4f3f0" />
<rect x="0" y="916" width="203" height="3" fill="#4a6a8a" />
<rect x="881" y="151" width="1" height="747" fill="#000" />
<rect x="883" y="175" width="1" height="193" fill="#000" />
<rect x="883" y="397" width="1" height="396" fill="#000" />
<rect x="1" y="919" width="1196" height="26" fill="#dcdad5" />
<text x="3.70" y="929" font-family="Liberation Sans" font-size="10.15" fill="#000" textLength="16.73" lengthAdjust="spacingAndGlyphs" >Fill:</text>
<text x="3.70" y="941.5" font-family="Liberation Sans" font-size="10.15" fill="#000" textLength="35.24" lengthAdjust="spacingAndGlyphs" >Stroke:</text>
<text x="74.50" y="929" font-family="Liberation Sans" font-size="10.76" fill="#000" textLength="18.80" lengthAdjust="spacingAndGlyphs" >N/A</text>
<text x="74.50" y="941.5" font-family="Liberation Sans" font-size="10.76" fill="#000" textLength="18.80" lengthAdjust="spacingAndGlyphs" >N/A</text>
<text x="126.00" y="935" font-family="Liberation Sans" font-size="11.67" fill="#000" textLength="12.00" lengthAdjust="spacingAndGlyphs" >O:</text>
<rect x="141" y="921" width="48" height="21" fill="#edebe7" />
<rect x="141" y="921" width="48" height="1" fill="#a19f99" />
<rect x="141" y="921" width="1" height="21" fill="#a19f99" />
<rect x="142" y="922" width="46" height="1" fill="#000" />
<rect x="142" y="922" width="1" height="19" fill="#000" />
<rect x="141" y="941" width="48" height="1" fill="#fff" />
<rect x="188" y="921" width="1" height="21" fill="#fff" />
<text x="145.50" y="935" font-family="Liberation Sans" font-size="11.67" fill="#8c8a86" textLength="7.32" lengthAdjust="spacingAndGlyphs" >0</text>
<rect x="191" y="920" width="1" height="25" fill="#fff" />
<rect x="190" y="920" width="1" height="25" fill="#9a9893" />
<g><path d="M199 931 Q205 924 211 931 Q205 938 199 931 Z" fill="#fff" stroke="#000" stroke-width="1.3"/><circle cx="205" cy="931" r="2.6" fill="#000"/><path d="M200 927 L199 925 M203 926 L202.5 924 M207 926 L207.5 924 M210 927 L211 925" stroke="#000" stroke-width="1"/></g>
<g><path d="M225 930 V927 Q225 924 227.5 924 Q230 924 230 927" fill="none" stroke="#333" stroke-width="1.3"/><rect x="222.5" y="929.5" width="8" height="6.5" fill="#f3d54e" stroke="#5a4a10" stroke-width="1"/><rect x="226" y="931.5" width="1.2" height="2.5" fill="#333"/></g>
<rect x="238" y="919" width="91" height="25" fill="#dcdad5" />
<rect x="238" y="919" width="91" height="1" fill="#fff" />
<rect x="238" y="919" width="1" height="25" fill="#fff" />
<rect x="238" y="943" width="91" height="1" fill="#000" />
<rect x="328" y="919" width="1" height="25" fill="#000" />
<circle cx="247" cy="931.5" r="1.6" fill="#000"/>
<text x="251.70" y="935" font-family="Liberation Sans" font-size="10.56" fill="#000" font-weight="bold" textLength="42.30" lengthAdjust="spacingAndGlyphs" >Layer 1</text>
<rect x="308" y="923" width="1" height="17" fill="#9a9893" />
<rect x="309" y="923" width="1" height="17" fill="#fff" />
<path d="M312 930.5 L321 930.5 L316.5 936 Z" fill="#000"/>
<text x="330.80" y="936" font-family="Liberation Sans" font-size="13.19" fill="#000" font-weight="bold" textLength="34.64" lengthAdjust="spacingAndGlyphs" >Shift</text>
<text x="365.44" y="936" font-family="Liberation Sans" font-size="13.19" fill="#000" textLength="351.39" lengthAdjust="spacingAndGlyphs" >: click to toggle select; drag for rubberband selection; </text>
<text x="716.82" y="936" font-family="Liberation Sans" font-size="13.19" fill="#000" font-weight="bold" textLength="20.55" lengthAdjust="spacingAndGlyphs" >Alt</text>
<text x="737.38" y="936" font-family="Liberation Sans" font-size="13.19" fill="#000" textLength="311.42" lengthAdjust="spacingAndGlyphs" >: click to select under; scroll mouse-wheel to c...</text>
<rect x="1050" y="920" width="1" height="25" fill="#9a9893" />
<rect x="1051" y="920" width="1" height="25" fill="#fff" />
<text x="1054.50" y="929" font-family="Liberation Sans" font-size="10.66" fill="#000" textLength="10.73" lengthAdjust="spacingAndGlyphs" >X:</text>
<text x="1054.50" y="941.4" font-family="Liberation Sans" font-size="10.66" fill="#000" textLength="8.56" lengthAdjust="spacingAndGlyphs" >Y:</text>
<text x="1081.80" y="929" font-family="Liberation Mono" font-size="11.50" fill="#000" textLength="34.70" lengthAdjust="spacingAndGlyphs" >46,77</text>
<text x="1075.50" y="941.4" font-family="Liberation Mono" font-size="11.50" fill="#000" textLength="41.00" lengthAdjust="spacingAndGlyphs" >307,36</text>
<text x="1126.40" y="935" font-family="Liberation Sans" font-size="11.67" fill="#000" textLength="11.00" lengthAdjust="spacingAndGlyphs" >Z:</text>
<rect x="1140" y="922" width="56" height="20" fill="#fff" />
<rect x="1140" y="922" width="56" height="1" fill="#a19f99" />
<rect x="1140" y="922" width="1" height="20" fill="#a19f99" />
<rect x="1141" y="923" width="54" height="1" fill="#000" />
<rect x="1141" y="923" width="1" height="18" fill="#000" />
<rect x="1140" y="941" width="56" height="1" fill="#fff" />
<rect x="1195" y="922" width="1" height="20" fill="#fff" />
<rect x="1184" y="923" width="12" height="18" fill="#dcdad5" />
<rect x="1184" y="923" width="1" height="18" fill="#000" />
<path d="M1187 930 L1190 926.5 L1193 930 Z" fill="#000"/><path d="M1187 934 L1190 937.5 L1193 934 Z" fill="#000"/>
<rect x="1185" y="932" width="11" height="1" fill="#aaa" />
<text x="1152.00" y="936" font-family="Liberation Sans" font-size="13.19" fill="#000" textLength="23.00" lengthAdjust="spacingAndGlyphs" >99%</text>
<rect x="384" y="122" width="1" height="20" fill="#9a9893" />
<rect x="385" y="122" width="1" height="20" fill="#fff" />
<rect x="177" y="922" width="11" height="19" fill="#dcdad5" />
<rect x="177" y="922" width="1" height="19" fill="#000" />
<rect x="187" y="922" width="1" height="19" fill="#000" />
<path d="M180 929 L182.5 926 L185 929 Z" fill="#777"/>
<path d="M180 934 L182.5 937 L185 934 Z" fill="#777"/>
<rect x="178" y="931" width="9" height="1" fill="#b5b2ac" />
<text x="400.00" y="135" font-family="Liberation Sans" font-size="10.83" fill="#8c8a86" textLength="11.00" lengthAdjust="spacingAndGlyphs" >X:</text>
<rect x="417" y="121" width="62" height="21" fill="#edebe7" />
<rect x="417" y="121" width="62" height="1" fill="#a19f99" />
<rect x="417" y="121" width="1" height="21" fill="#a19f99" />
<rect x="418" y="122" width="60" height="1" fill="#000" />
<rect x="418" y="122" width="1" height="19" fill="#000" />
<rect x="417" y="141" width="62" height="1" fill="#fff" />
<rect x="478" y="121" width="1" height="21" fill="#fff" />
<text x="421.70" y="135" font-family="Liberation Sans" font-size="10.83" fill="#8c8a86" textLength="37.34" lengthAdjust="spacingAndGlyphs" >37,298</text>
<rect x="467" y="123" width="11" height="17" fill="#dcdad5" />
<rect x="467" y="123" width="1" height="17" fill="#000" />
<rect x="477" y="123" width="1" height="17" fill="#000" />
<path d="M470 130 L472.5 127 L475 130 Z" fill="#777"/>
<path d="M470 133 L472.5 136 L475 133 Z" fill="#777"/>
<rect x="468" y="131" width="9" height="1" fill="#b5b2ac" />
<text x="487.00" y="135" font-family="Liberation Sans" font-size="10.83" fill="#8c8a86" textLength="10.00" lengthAdjust="spacingAndGlyphs" >Y:</text>
<rect x="503" y="121" width="62" height="21" fill="#edebe7" />
<rect x="503" y="121" width="62" height="1" fill="#a19f99" />
<rect x="503" y="121" width="1" height="21" fill="#a19f99" />
<rect x="504" y="122" width="60" height="1" fill="#000" />
<rect x="504" y="122" width="1" height="19" fill="#000" />
<rect x="503" y="141" width="62" height="1" fill="#fff" />
<rect x="564" y="121" width="1" height="21" fill="#fff" />
<defs><clipPath id="clipY"><rect x="505" y="120" width="45" height="22"/></clipPath></defs>
<text x="507.70" y="135" font-family="Liberation Sans" font-size="10.83" fill="#8c8a86" textLength="44.12" lengthAdjust="spacingAndGlyphs" clip-path="url(#clipY)">259,719</text>
<rect x="553" y="123" width="11" height="17" fill="#dcdad5" />
<rect x="553" y="123" width="1" height="17" fill="#000" />
<rect x="563" y="123" width="1" height="17" fill="#000" />
<path d="M556 130 L558.5 127 L561 130 Z" fill="#777"/>
<path d="M556 133 L558.5 136 L561 133 Z" fill="#777"/>
<rect x="554" y="131" width="9" height="1" fill="#b5b2ac" />
<text x="574.00" y="135" font-family="Liberation Sans" font-size="10.83" fill="#8c8a86" textLength="14.00" lengthAdjust="spacingAndGlyphs" >W:</text>
<rect x="593" y="121" width="62" height="21" fill="#edebe7" />
<rect x="593" y="121" width="62" height="1" fill="#a19f99" />
<rect x="593" y="121" width="1" height="21" fill="#a19f99" />
<rect x="594" y="122" width="60" height="1" fill="#000" />
<rect x="594" y="122" width="1" height="19" fill="#000" />
<rect x="593" y="141" width="62" height="1" fill="#fff" />
<rect x="654" y="121" width="1" height="21" fill="#fff" />
<text x="597.70" y="135" font-family="Liberation Sans" font-size="10.83" fill="#8c8a86" textLength="37.34" lengthAdjust="spacingAndGlyphs" >23,509</text>
<rect x="643" y="123" width="11" height="17" fill="#dcdad5" />
<rect x="643" y="123" width="1" height="17" fill="#000" />
<rect x="653" y="123" width="1" height="17" fill="#000" />
<path d="M646 130 L648.5 127 L651 130 Z" fill="#777"/>
<path d="M646 133 L648.5 136 L651 133 Z" fill="#777"/>
<rect x="644" y="131" width="9" height="1" fill="#b5b2ac" />
<text x="696.00" y="135" font-family="Liberation Sans" font-size="10.83" fill="#8c8a86" textLength="11.00" lengthAdjust="spacingAndGlyphs" >H:</text>
<rect x="714" y="121" width="62" height="21" fill="#edebe7" />
<rect x="714" y="121" width="62" height="1" fill="#a19f99" />
<rect x="714" y="121" width="1" height="21" fill="#a19f99" />
<rect x="715" y="122" width="60" height="1" fill="#000" />
<rect x="715" y="122" width="1" height="19" fill="#000" />
<rect x="714" y="141" width="62" height="1" fill="#fff" />
<rect x="775" y="121" width="1" height="21" fill="#fff" />
<text x="718.70" y="135" font-family="Liberation Sans" font-size="10.83" fill="#8c8a86" textLength="30.55" lengthAdjust="spacingAndGlyphs" >4,215</text>
<rect x="764" y="123" width="11" height="17" fill="#dcdad5" />
<rect x="764" y="123" width="1" height="17" fill="#000" />
<rect x="774" y="123" width="1" height="17" fill="#000" />
<path d="M767 130 L769.5 127 L772 130 Z" fill="#777"/>
<path d="M767 133 L769.5 136 L772 133 Z" fill="#777"/>
<rect x="765" y="131" width="9" height="1" fill="#b5b2ac" />
<g><path d="M669 129.5 V126.5 Q669 124 671.5 124 Q674 124 674 126.5 V128" fill="none" stroke="#333" stroke-width="1.2"/><rect x="666.5" y="129.5" width="8" height="6.5" fill="#f1d45a" stroke="#3a3010" stroke-width="1"/><rect x="670" y="131.5" width="1.2" height="2.5" fill="#333"/></g>
<rect x="775" y="119" width="52" height="26" fill="#dcdad5" />
<rect x="775" y="119" width="52" height="1" fill="#fff" />
<rect x="775" y="119" width="1" height="26" fill="#fff" />
<rect x="775" y="144" width="52" height="1" fill="#000" />
<rect x="826" y="119" width="1" height="26" fill="#000" />
<text x="781.00" y="135" font-family="Liberation Sans" font-size="10.83" fill="#000" textLength="20.79" lengthAdjust="spacingAndGlyphs" >mm</text>
<rect x="806" y="122" width="1" height="20" fill="#9a9893" />
<rect x="807" y="122" width="1" height="20" fill="#fff" />
<path d="M811 128.5 L820 128.5 L815.5 134 Z" fill="#000"/>
<rect x="832" y="122" width="1" height="20" fill="#9a9893" />
<rect x="833" y="122" width="1" height="20" fill="#fff" />
<rect x="4" y="51" width="25" height="25" fill="#c6c3be" />
<rect x="4" y="51" width="25" height="1" fill="#000" />
<rect x="4" y="51" width="1" height="25" fill="#000" />
<rect x="4" y="75" width="25" height="1" fill="#fff" />
<rect x="28" y="51" width="1" height="25" fill="#fff" />
<path d="M12.5 59.3 L19 65.8" stroke="#000" stroke-width="1.3"/>
<path d="M16 66.3 L19.8 66.6 L19.5 62.8" stroke="#000" stroke-width="1.3" fill="none"/>
<path d="M11 55.0 L13.8 57.8 L11 60.599999999999994 L8.2 57.8 Z" fill="#b4b0ee" stroke="#3030f0" stroke-width="1.6"/>
<path d="M21 65.0 L23.8 67.8 L21 70.6 L18.2 67.8 Z" fill="#b4b0ee" stroke="#2a8f2a" stroke-width="1.6"/>
<rect x="34" y="55" width="1" height="16" fill="#9a9893" />
<rect x="35" y="55" width="1" height="16" fill="#fff" />
<path d="M50.5 59.3 L57 65.8" stroke="#000" stroke-width="1.3"/>
<path d="M54 66.3 L57.8 66.6 L57.5 62.8" stroke="#000" stroke-width="1.3" fill="none"/>
<path d="M49 55.0 L51.8 57.8 L49 60.599999999999994 L46.2 57.8 Z" fill="#b4b0ee" stroke="#3030f0" stroke-width="1.6"/>
<path d="M59 65.0 L61.8 67.8 L59 70.6 L56.2 67.8 Z" fill="#b4b0ee" stroke="#2a8f2a" stroke-width="1.6"/>
<path d="M85.5 55 V68 H72" stroke="#3a8a3a" stroke-width="1.2" fill="none" stroke-dasharray="1.6 1.6"/>
<path d="M111 55 V67.5 H98" stroke="#555" stroke-width="1.2" fill="none" stroke-dasharray="1.6 1.6"/>
<path d="M110.5 64.7 L113.3 67.5 L110.5 70.3 L107.7 67.5 Z" fill="#a9a6d8" stroke="#2a8f2a" stroke-width="1.1"/>
<path d="M125 67.5 H137" stroke="#111" stroke-width="1.3" fill="none" stroke-dasharray="1.5 1.5"/>
<path d="M137 55 V67" stroke="#777" stroke-width="1" fill="none" stroke-dasharray="1.5 1"/>
<path d="M137 56.4 L139.6 59 L137 61.6 L134.4 59 Z" fill="#a9a6d8" stroke="#2a8f2a" stroke-width="1.3"/>
<path d="M153.5 56.9 L156.1 59.5 L153.5 62.1 L150.9 59.5 Z" fill="#c8c6e8" stroke="#2a8f2a" stroke-width="1.2"/>
<path d="M162.5 55 V67.5 H150" stroke="#111" stroke-width="1.3" fill="none" stroke-dasharray="1.5 1.5"/>
<rect x="176" y="55" width="1" height="16" fill="#9a9893" />
<rect x="177" y="55" width="1" height="16" fill="#fff" />
<rect x="184" y="51" width="25" height="25" fill="#c6c3be" />
<rect x="184" y="51" width="25" height="1" fill="#000" />
<rect x="184" y="51" width="1" height="25" fill="#000" />
<rect x="184" y="75" width="25" height="1" fill="#fff" />
<rect x="208" y="51" width="1" height="25" fill="#fff" />
<path d="M192.5 59.3 L199 65.8" stroke="#000" stroke-width="1.3"/>
<path d="M196 66.3 L199.8 66.6 L199.5 62.8" stroke="#000" stroke-width="1.3" fill="none"/>
<path d="M191 55.0 L193.8 57.8 L191 60.599999999999994 L188.2 57.8 Z" fill="#b4b0ee" stroke="#3030f0" stroke-width="1.6"/>
<path d="M201 65.0 L203.8 67.8 L201 70.6 L198.2 67.8 Z" fill="#b4b0ee" stroke="#2a8f2a" stroke-width="1.6"/>
<path d="M215 57 Q226 58 227 70 Q230 66 230 64" stroke="#1f8f1f" stroke-width="1.5" fill="none"/>
<path d="M222.5 67.5 L226.5 70 L229.5 65" stroke="#1f8f1f" stroke-width="1.5" fill="none"/>
<path d="M241 70 L255 56 M241 64.5 L255 61" stroke="#555" stroke-width="1.1"/>
<rect x="246" y="61" width="4.5" height="4.5" fill="#b4b0ee" stroke="#1f8f1f" stroke-width="1.5"/>
<rect x="262" y="51" width="25" height="25" fill="#c6c3be" />
<rect x="262" y="51" width="25" height="1" fill="#000" />
<rect x="262" y="51" width="1" height="25" fill="#000" />
<rect x="262" y="75" width="25" height="1" fill="#fff" />
<rect x="286" y="51" width="1" height="25" fill="#fff" />
<path d="M262 57 Q276 56 276 66 M276 68 Q280 66 281 63" stroke="#666" stroke-width="1.1" fill="none"/>
<path d="M274 65.0 L276.8 67.8 L274 70.6 L271.2 67.8 Z" fill="#b4b0ee" stroke="#2a8f2a" stroke-width="1.6"/>
<path d="M293 55.5 Q297 56 299.5 58 Q303 61 301 66 Q301 69 307 64" stroke="#666" stroke-width="1.1" fill="none"/>
<rect x="297.5" y="56.5" width="4" height="4" fill="#b4b0ee" stroke="#1f8f1f" stroke-width="1.5"/>
<path d="M319 70 L333 56" stroke="#444" stroke-width="1"/>
<path d="M320 66 L323 70 M322 64 L325 69 M329 56 L332 61 M331 55 L334 60" stroke="#d02020" stroke-width="1.2"/>
<circle cx="326" cy="63" r="2.3" fill="#b4b0ee" stroke="#1f8f1f" stroke-width="1.3"/>
<rect x="345" y="55" width="1" height="16" fill="#9a9893" />
<rect x="346" y="55" width="1" height="16" fill="#fff" />
<rect x="352" y="51" width="25" height="25" fill="#c6c3be" />
<rect x="352" y="51" width="25" height="1" fill="#000" />
<rect x="352" y="51" width="1" height="25" fill="#000" />
<rect x="352" y="75" width="25" height="1" fill="#fff" />
<rect x="376" y="51" width="1" height="25" fill="#fff" />
<path d="M360.0 59.3 L366.5 65.8" stroke="#000" stroke-width="1.3"/>
<path d="M363.5 66.3 L367.3 66.6 L367.0 62.8" stroke="#000" stroke-width="1.3" fill="none"/>
<path d="M358.5 55.0 L361.3 57.8 L358.5 60.599999999999994 L355.7 57.8 Z" fill="#b4b0ee" stroke="#3030f0" stroke-width="1.6"/>
<path d="M368.5 65.0 L371.3 67.8 L368.5 70.6 L365.7 67.8 Z" fill="#b4b0ee" stroke="#2a8f2a" stroke-width="1.6"/>
<path d="M394.5 55 V68 H382" stroke="#8a8a8a" stroke-width="1.5" fill="none"/>
<circle cx="387" cy="60.5" r="2.2" fill="#b4b0ee" stroke="#1f8f1f" stroke-width="1.4"/>
<path d="M410 60.5 H416 M413 57.5 V63.5" stroke="#333" stroke-width="1.3"/>
<path d="M419.5 55 V68 H408" stroke="#222" stroke-width="1.2" fill="none" stroke-dasharray="1.5 1.2"/>
<path d="M437 68 L441 68" stroke="#55aa55" stroke-width="2"/>
<text x="436" y="68.5" font-family="Liberation Sans" font-weight="bold" font-size="18" fill="#111" textLength="14" lengthAdjust="spacingAndGlyphs">A</text>
<rect x="441" y="67" width="9" height="2" fill="#6fbf6f" />
<path d="M436.5 65.9 L439.1 68.5 L436.5 71.1 L433.9 68.5 Z" fill="#b4b0ee" stroke="#2a8f2a" stroke-width="1.4"/>
<rect x="460" y="55" width="1" height="16" fill="#9a9893" />
<rect x="461" y="55" width="1" height="16" fill="#fff" />
<defs><linearGradient id="pgb" x1="0" y1="0" x2="1" y2="1"><stop offset="0" stop-color="#fff"/><stop offset="1" stop-color="#bbb"/></linearGradient></defs>
<rect x="474.5" y="55.5" width="10" height="14" fill="url(#pgb)" stroke="#111" stroke-width="1.2"/>
<rect x="494" y="51" width="25" height="25" fill="#c6c3be" />
<rect x="494" y="51" width="25" height="1" fill="#000" />
<rect x="494" y="51" width="1" height="25" fill="#000" />
<rect x="494" y="75" width="25" height="1" fill="#fff" />
<rect x="518" y="51" width="1" height="25" fill="#fff" />
<g stroke="#1010f0" stroke-width="1.3"><path d="M499.5 55 V70.5"/><path d="M503.5 55 V70.5"/><path d="M507.5 55 V70.5"/><path d="M511.5 55 V70.5"/><path d="M498 55.8 H513"/><path d="M498 59.5 H513"/><path d="M498 63.3 H513"/><path d="M498 67 H513"/></g>
<rect x="520" y="51" width="25" height="25" fill="#c6c3be" />
<rect x="520" y="51" width="25" height="1" fill="#000" />
<rect x="520" y="51" width="1" height="25" fill="#000" />
<rect x="520" y="75" width="25" height="1" fill="#fff" />
<rect x="544" y="51" width="1" height="25" fill="#fff" />
<g stroke="#1010f0" stroke-width="1.3"><path d="M524.5 55 V70.5"/><path d="M529.5 70.5 L534.5 55.5"/><path d="M536.5 55 V70.5"/></g>
<defs>
<linearGradient id="gpaper" x1="0" y1="0" x2="1" y2="1"><stop offset="0" stop-color="#ffffff"/><stop offset="1" stop-color="#dcdcdc"/></linearGradient>
<linearGradient id="gblue" x1="0" y1="0" x2="1" y2="1"><stop offset="0" stop-color="#e4eef8"/><stop offset="1" stop-color="#a9c1dc"/></linearGradient>
<linearGradient id="gyel" x1="0" y1="0" x2="0" y2="1"><stop offset="0" stop-color="#ffe680"/><stop offset="1" stop-color="#e8a400"/></linearGradient>
<radialGradient id="glens" cx="0.4" cy="0.35" r="0.7"><stop offset="0" stop-color="#ffffff"/><stop offset="1" stop-color="#b7cbe0"/></radialGradient>
<pattern id="dithY" width="2" height="2" patternUnits="userSpaceOnUse"><rect width="2" height="2" fill="#f2f0e4"/><rect width="1" height="1" fill="#a8982e"/><rect x="1" y="1" width="1" height="1" fill="#a8982e"/></pattern>
<pattern id="dithG" width="2" height="2" patternUnits="userSpaceOnUse"><rect width="2" height="2" fill="#e8f0e2"/><rect width="1" height="1" fill="#3f8a2e"/><rect x="1" y="1" width="1" height="1" fill="#3f8a2e"/></pattern>
<pattern id="dithB" width="2" height="2" patternUnits="userSpaceOnUse"><rect width="2" height="2" fill="#f2ebe4"/><rect width="1" height="1" fill="#b89070"/><rect x="1" y="1" width="1" height="1" fill="#b89070"/></pattern>
</defs>
<path d="M12.5 88.5 H22 L26 92.5 V103.5 H12.5 Z" fill="url(#gpaper)" stroke="#8a8a8a" stroke-width="1"/><path d="M22 88.5 V92.5 H26" fill="none" stroke="#8a8a8a" stroke-width="1"/>
<path d="M43.5 102.5 V89.5 H49 L50.5 91.5 H56.5 V95" fill="#c8cca6" stroke="#85896a" stroke-width="1"/>
<path d="M43.5 102.5 L45.5 95.5 H58.5 L56.5 102.5 Z" fill="#d9dcbc" stroke="#85896a" stroke-width="1"/>
<rect x="75.5" y="88.5" width="15" height="15" rx="1.5" fill="#3a68b3" stroke="#24508f" stroke-width="1"/>
<rect x="77" y="89" width="12" height="2" fill="#e21c1c" />
<rect x="77" y="91" width="12" height="5" fill="#f0f0f0" />
<rect x="78" y="93" width="10" height="1" fill="#cfcfcf" />
<rect x="79" y="98" width="8" height="5" fill="#dedede" />
<rect x="80" y="99" width="2" height="3" fill="#3a68b3" />
<rect x="78.5" y="97.5" width="9" height="6" fill="none" stroke="#555" stroke-width="1"/>
<rect x="110.5" y="88.5" width="10" height="7" fill="#f2f2f2" stroke="#777" stroke-width="1"/>
<path d="M109 91 H119 M109 93 H119" stroke="#aaa" stroke-width="1"/>
<path d="M107.5 97 L109.5 94.5 H121.5 L123.5 97 V103.5 H107.5 Z" fill="#e8e8e8" stroke="#6a6a6a" stroke-width="1"/>
<rect x="110" y="100" width="11" height="1.5" fill="#666" />
<rect x="137" y="86" width="1" height="20" fill="#9a9893" />
<rect x="138" y="86" width="1" height="20" fill="#fff" />
<path d="M155.5 88.5 H163 L166.5 92 V103.5 H155.5 Z" fill="url(#gpaper)" stroke="#111" stroke-width="1"/><path d="M163 88.5 V92 H166.5" fill="none" stroke="#111"/>
<path d="M151 96.5 H159" stroke="#000" stroke-width="1.2"/><path d="M158 93.5 L162 96.5 L158 99.5 Z" fill="#000"/>
<path d="M183.5 88.5 H191 L194.5 92 V103.5 H183.5 Z" fill="url(#gpaper)" stroke="#111" stroke-width="1"/><path d="M191 88.5 V92 H194.5" fill="none" stroke="#111"/>
<path d="M189 96.5 H197" stroke="#000" stroke-width="1.2"/><path d="M196 93.5 L200 96.5 L196 99.5 Z" fill="#000"/>
<rect x="212" y="86" width="1" height="20" fill="#9a9893" />
<rect x="213" y="86" width="1" height="20" fill="#fff" />
<path d="M224.5 93.5 L231 87 L234 90 L233 91 H238 Q245.5 91 245.5 97.5 Q245.5 102 242 103.5 L238.5 103.5 L241.5 100 Q242.2 98.8 241.6 97.5 Q241 95.5 238 95.5 H233 L234 96.8 L231 100 Z" fill="url(#dithY)" stroke="#b0a450" stroke-width="0.7"/>
<path d="M277.5 93.5 L271 87 L268 90 L269 91 H264 Q256.5 91 256.5 97.5 Q256.5 102 260 103.5 L263.5 103.5 L260.5 100 Q259.8 98.8 260.4 97.5 Q261 95.5 264 95.5 H269 L268 96.8 L271 100 Z" fill="url(#dithG)" stroke="#4a9a3a" stroke-width="0.7"/>
<rect x="288" y="86" width="1" height="20" fill="#9a9893" />
<rect x="289" y="86" width="1" height="20" fill="#fff" />
<rect x="303.5" y="88.5" width="10" height="11" fill="#f3f3f3" stroke="#bbb" stroke-width="1"/>
<path d="M307.5 91.5 H318.5 V101 L316 103.5 H307.5 Z" fill="#f3f3f3" stroke="#999" stroke-width="1"/>
<path d="M309.5 94.5 H316 M309.5 96.5 H316 M309.5 98.5 H314" stroke="#bbb" stroke-width="0.8"/>
<path d="M337 88 L343.5 98 M348 88 L341.5 98" stroke="#9a9a9a" stroke-width="1.2"/>
<rect x="335" y="97" width="6" height="6" rx="1.5" fill="#c68a22" stroke="#8a5a10" stroke-width="0.8"/><rect x="344" y="97" width="6" height="6" rx="1.5" fill="#c68a22" stroke="#8a5a10" stroke-width="0.8"/>
<circle cx="338" cy="100" r="1" fill="#f3e3c0"/><circle cx="347" cy="100" r="1" fill="#f3e3c0"/>
<rect x="368.5" y="89.5" width="13" height="14" rx="1.5" fill="#c0801a" stroke="#7a5008" stroke-width="1"/>
<path d="M370.5 91.5 H379.5 V100 L377 102.5 H370.5 Z" fill="#ececec"/>
<rect x="372" y="88" width="6" height="3" fill="#888" />
<path d="M372 94.5 H378 M372 96.5 H378" stroke="#aaa" stroke-width="0.8"/>
<rect x="396" y="86" width="1" height="20" fill="#9a9893" />
<rect x="397" y="86" width="1" height="20" fill="#fff" />
<path d="M422.6 99 L425.6 102" stroke="#000" stroke-width="2.6"/>
<circle cx="418.6" cy="95" r="6.3" fill="url(#glens)" stroke="#111" stroke-width="1.3"/>
<rect x="414.5" y="91.5" width="8" height="6" fill="#fff" stroke="#222" stroke-width="1" stroke-dasharray="1 1"/>
<path d="M454.6 99 L457.6 102" stroke="#000" stroke-width="2.6"/>
<circle cx="450.6" cy="95" r="6.3" fill="url(#glens)" stroke="#111" stroke-width="1.3"/>
<rect x="446.5" y="90.5" width="5" height="5" fill="url(#gyel)" stroke="#333" stroke-width="0.8"/><rect x="449.5" y="94.5" width="5" height="5" fill="url(#gyel)" stroke="#333" stroke-width="0.8"/>
<path d="M486 99 L489 102" stroke="#000" stroke-width="2.6"/>
<circle cx="482" cy="95" r="6.3" fill="url(#glens)" stroke="#111" stroke-width="1.3"/>
<rect x="479" y="90.5" width="6" height="8.5" fill="url(#gpaper)" stroke="#222" stroke-width="1"/>
<rect x="505" y="86" width="1" height="20" fill="#9a9893" />
<rect x="506" y="86" width="1" height="20" fill="#fff" />
<rect x="519.5" y="88.5" width="9" height="8" fill="url(#gblue)" stroke="#111" stroke-width="1"/>
<rect x="522.5" y="91.5" width="12" height="12" fill="url(#gblue)" stroke="#111" stroke-width="1.2"/>
<rect x="551.5" y="88.5" width="9" height="8" fill="url(#gblue)" stroke="#111" stroke-width="1"/>
<rect x="554.5" y="91.5" width="12" height="12" fill="url(#gblue)" stroke="#111" stroke-width="1.2"/>
<path d="M559 99 V97 Q559 95 561 95 Q563 95 563 97 V99" fill="none" stroke="#111" stroke-width="1.1"/><rect x="557.5" y="98.5" width="7" height="5" fill="#f5b820" stroke="#111" stroke-width="1"/>
<rect x="583.5" y="88.5" width="9" height="8" fill="url(#gblue)" stroke="#111" stroke-width="1"/>
<rect x="586.5" y="91.5" width="12" height="12" fill="url(#gblue)" stroke="#111" stroke-width="1.2"/>
<path d="M591 99 V97 Q591 95 593 95 Q595 95 595 97 V98" fill="none" stroke="#111" stroke-width="1.1"/><rect x="589.5" y="98.5" width="7" height="5" fill="#6cb24c" stroke="#111" stroke-width="1"/>
<rect x="612" y="86" width="1" height="20" fill="#9a9893" />
<rect x="613" y="86" width="1" height="20" fill="#fff" />
<rect x="630.0" y="95.0" width="9" height="7" fill="url(#gblue)" stroke="#111" stroke-width="1"/>
<circle cx="637.5" cy="94.0" r="4.2" fill="url(#glens)" stroke="#222" stroke-width="1"/>
<rect x="627.0" y="88.0" width="2" height="2" fill="#000" />
<rect x="641.0" y="88.0" width="2" height="2" fill="#000" />
<rect x="627.0" y="102.0" width="2" height="2" fill="#000" />
<rect x="641.0" y="102.0" width="2" height="2" fill="#000" />
<rect x="662.0" y="95.0" width="9" height="7" fill="url(#gyel)" stroke="#111" stroke-width="1"/>
<circle cx="669.5" cy="94.0" r="4.2" fill="url(#glens)" stroke="#222" stroke-width="1"/>
<rect x="659.0" y="88.0" width="2" height="2" fill="#000" />
<rect x="673.0" y="88.0" width="2" height="2" fill="#000" />
<rect x="659.0" y="102.0" width="2" height="2" fill="#000" />
<rect x="673.0" y="102.0" width="2" height="2" fill="#000" />
<rect x="662" y="98" width="2" height="2" fill="#000" />
<rect x="673" y="97" width="2" height="2" fill="#000" />
<rect x="689" y="86" width="1" height="20" fill="#9a9893" />
<rect x="690" y="86" width="1" height="20" fill="#fff" />
<path d="M735 88.5 H751 V93 L749.5 93 Q749 90.5 746 90.5 H744.5 V101.5 Q744.5 102.7 746.5 102.7 V104 H739.5 V102.7 Q741.5 102.7 741.5 101.5 V90.5 H740 Q737 90.5 736.5 93 L735 93 Z" fill="#000"/>
<path d="M767.5 96.5 H779 L782.8 101.3 H771.3 Z" fill="#fff" stroke="#111" stroke-width="1.2" stroke-linejoin="round"/>
<path d="M767.5 93.5 H779 L782.8 98.3 H771.3 Z" fill="#fff" stroke="#111" stroke-width="1.2" stroke-linejoin="round"/>
<path d="M767.5 90.5 H779 L782.8 95.3 H771.3 Z" fill="#fff" stroke="#111" stroke-width="1.2" stroke-linejoin="round"/>
<rect x="799.5" y="88.5" width="15" height="15" fill="#f7f7f5" stroke="#111" stroke-width="1.1"/>
<rect x="800" y="89" width="14" height="2.5" fill="#a6c4e6" />
<path d="M805 93.5 L802 97 L805 100.5 M809 93.5 L812 97 L809 100.5" fill="none" stroke="#333" stroke-width="1.1"/>
<rect x="831" y="88" width="1" height="16" fill="#d01010" />
<rect x="833.5" y="88.5" width="6" height="4" fill="#b8cfe8" stroke="#111" stroke-width="1"/><rect x="833.5" y="93.5" width="13.5" height="4" fill="#b8cfe8" stroke="#111" stroke-width="1"/><rect x="833.5" y="99.5" width="10.5" height="4" fill="#b8cfe8" stroke="#111" stroke-width="1"/>
<rect x="860" y="86" width="1" height="20" fill="#9a9893" />
<rect x="861" y="86" width="1" height="20" fill="#fff" />
<path d="M876.5 88.5 H886 L889.5 92 V103.5 H876.5 Z" fill="url(#gpaper)" stroke="#777" stroke-width="1"/>
<path d="M877.5 91 Q877 96 881.5 96.5 V102.5 H884.5 V96.5 Q889 96 888.5 91 L886 91 V93.5 H880 V91 Z" fill="#d6d6d6" stroke="#666" stroke-width="0.9"/>
<rect x="881" y="101" width="4" height="2.5" fill="#2a58a8" />
<g stroke-linecap="round" transform="translate(915 96) scale(0.82) translate(-915 -96)">
<path d="M910 91 L920.5 101.5" stroke="#707070" stroke-width="3.6"/>
<path d="M906.5 90.5 Q907 87 910 87.5 L909 90 L911 92 L913.5 91 Q914 94 910.5 94.5 Z" fill="#eee" stroke="#707070" stroke-width="1"/>
<path d="M924 101.5 Q923.5 105 920.5 104.5 L921.5 102 L919.5 100 L917 101 Q916.5 98 920 97.5 Z" fill="#eee" stroke="#707070" stroke-width="1"/>
<path d="M910 91 L920.5 101.5" stroke="#f0f0f0" stroke-width="1.5"/>
<path d="M914 97.5 L920.5 90" stroke="#707070" stroke-width="2.6"/><path d="M914 97.5 L920.5 90" stroke="#eee" stroke-width="1.2"/>
<path d="M920 88.5 L922.5 88.5 L922.5 91 L920.5 91.5 Z" fill="#ddd" stroke="#777" stroke-width="0.8"/>
<ellipse cx="910.5" cy="101" rx="4.3" ry="2.4" transform="rotate(-45 910.5 101)" fill="#8ab4e8" stroke="#2a5aaa" stroke-width="1.1"/>
</g>
<path d="M12.5 124.5 H22 L26 128.5 V139.5 H12.5 Z" fill="url(#gpaper)" stroke="#8a8a8a" stroke-width="1"/>
<path d="M15.5 128.5 H20.5 V130.5 H22.5 V137.5 H15.5 Z" fill="#3a6ab8"/>
<path d="M16.5 131.5 H22 M16.5 133.5 H22 M16.5 135.5 H22" stroke="#fff" stroke-width="0.9"/>
<rect x="43.5" y="124.5" width="15" height="15" fill="none" stroke="#111" stroke-width="1.2" stroke-dasharray="2 1.3"/>
<path d="M46 133 L49 131.5 H55 L56 134.5 L53 136 H47 Z" fill="#f0f0f0" stroke="#555" stroke-width="0.8"/>
<path d="M46 130.5 L49 129.0 H55 L56 132.0 L53 133.5 H47 Z" fill="#f0f0f0" stroke="#555" stroke-width="0.8"/>
<path d="M46 128 L49 126.5 H55 L56 129.5 L53 131 H47 Z" fill="#f0f0f0" stroke="#555" stroke-width="0.8"/>
<rect x="75.5" y="124.5" width="15" height="15" fill="none" stroke="#a01818" stroke-width="1.2" stroke-dasharray="1.3 2"/>
<path d="M77.5 137.5 V131.5 H80 L82 133 H86 V137.5 Z" fill="#e8d890" stroke="#666" stroke-width="0.8"/>
<circle cx="84.5" cy="130" r="4" fill="#c8d4e0" stroke="#555" stroke-width="0.9"/>
<rect x="104" y="122" width="1" height="20" fill="#9a9893" />
<rect x="105" y="122" width="1" height="20" fill="#fff" />
<defs><linearGradient id="fadeR" x1="0" y1="0" x2="1" y2="0"><stop offset="0" stop-color="#fff" stop-opacity="0"/><stop offset="1" stop-color="#dcdad5" stop-opacity="0.9"/></linearGradient><linearGradient id="fadeL" x1="1" y1="0" x2="0" y2="0"><stop offset="0" stop-color="#fff" stop-opacity="0"/><stop offset="1" stop-color="#dcdad5" stop-opacity="0.9"/></linearGradient></defs>
<ellipse cx="124.5" cy="142.5" rx="6" ry="1.2" fill="#b8b5b0" opacity="0.6"/>
<ellipse cx="161.5" cy="142.5" rx="6" ry="1.2" fill="#b8b5b0" opacity="0.6"/>
<ellipse cx="191.5" cy="142.5" rx="6" ry="1.2" fill="#b8b5b0" opacity="0.6"/>
<ellipse cx="223.5" cy="142.5" rx="6" ry="1.2" fill="#b8b5b0" opacity="0.6"/>
<path d="M137 121.5 V126.5 H130 Q127.5 126.5 127.5 129 V134 H131 L124 142.5 L117 134 H121 V129 Q121 121.5 129 121.5 Z" fill="url(#dithB)" stroke="#b08058" stroke-width="0.8"/>
<rect x="131" y="121" width="7" height="6" fill="url(#fadeR)" />
<path d="M149 121.5 V126.5 H156 Q158.5 126.5 158.5 129 V134 H155 L162 142.5 L169 134 H165 V129 Q165 121.5 157 121.5 Z" fill="url(#dithB)" stroke="#b08058" stroke-width="0.8"/>
<rect x="148" y="121" width="7" height="6" fill="url(#fadeL)" />
<path d="M180.5 133 L186 127.5 L189.5 131 H193.5 L197 127.5 L202.5 133 L197 138.5 L193.5 135 H189.5 L186 138.5 Z" fill="url(#dithB)" stroke="#b08058" stroke-width="0.8"/>
<path d="M223.5 120.5 L229 126 L225.5 129.5 V133.5 L229 137 L223.5 142.5 L218 137 L221.5 133.5 V129.5 L218 126 Z" fill="url(#dithB)" stroke="#b08058" stroke-width="0.8"/>
<rect x="245" y="122" width="1" height="20" fill="#9a9893" />
<rect x="246" y="122" width="1" height="20" fill="#fff" />
<path d="M263 124 V135" stroke="#222" stroke-width="1" stroke-dasharray="1.2 0.8"/><path d="M260 133 L263 136 L266 133" fill="none" stroke="#222" stroke-width="1.2"/>
<path d="M268 125 L269 124 L270 125 L271 124 L272 125 L273 124 L274 125 L275 124 L276 125" fill="none" stroke="#333" stroke-width="0.9"/>
<path d="M268 128.5 L269 127.5 L270 128.5 L271 127.5 L272 128.5 L273 127.5 L274 128.5 L275 127.5 L276 128.5" fill="none" stroke="#333" stroke-width="0.9"/>
<path d="M268 132 L269 131 L270 132 L271 131 L272 132 L273 131 L274 132 L275 131 L276 132" fill="none" stroke="#333" stroke-width="0.9"/>
<path d="M268 135.5 L269 134.5 L270 135.5 L271 134.5 L272 135.5 L273 134.5 L274 135.5 L275 134.5 L276 135.5" fill="none" stroke="#333" stroke-width="0.9"/>
<rect x="259.5" y="137" width="16" height="2.5" rx="1.2" fill="#f2e2b0" stroke="#222" stroke-width="0.9" stroke-dasharray="1 0.6"/>
<path d="M300 125 L301 124 L302 125 L303 124 L304 125 L305 124 L306 125 L307 124 L308 125" fill="none" stroke="#333" stroke-width="0.9"/>
<path d="M300 128.5 L301 127.5 L302 128.5 L303 127.5 L304 128.5 L305 127.5 L306 128.5 L307 127.5 L308 128.5" fill="none" stroke="#333" stroke-width="0.9"/>
<path d="M300 138.5 L301 137.5 L302 138.5 L303 137.5 L304 138.5 L305 137.5 L306 138.5 L307 137.5 L308 138.5" fill="none" stroke="#333" stroke-width="0.9"/>
<path d="M294 125 V131" stroke="#222" stroke-width="1" stroke-dasharray="1.2 0.8"/><path d="M291.5 129.5 L294 132 L296.5 129.5" fill="none" stroke="#222" stroke-width="1.2"/>
<rect x="290.5" y="133.5" width="16" height="2.5" rx="1.2" fill="#f2e2b0" stroke="#222" stroke-width="0.9" stroke-dasharray="1 0.6"/>
<path d="M323 125 L324 124 L325 125 L326 124 L327 125 L328 124 L329 125 L330 124 L331 125" fill="none" stroke="#333" stroke-width="0.9"/>
<path d="M323 135 L324 134 L325 135 L326 134 L327 135 L328 134 L329 135 L330 134 L331 135" fill="none" stroke="#333" stroke-width="0.9"/>
<path d="M323 138.5 L324 137.5 L325 138.5 L326 137.5 L327 138.5 L328 137.5 L329 138.5 L330 137.5 L331 138.5" fill="none" stroke="#333" stroke-width="0.9"/>
<rect x="322.5" y="128.5" width="16" height="2.5" rx="1.2" fill="#e8e8e8" stroke="#222" stroke-width="0.9" stroke-dasharray="1 0.6"/>
<path d="M331 135 H337" stroke="#222" stroke-width="1" stroke-dasharray="1.2 0.8"/><path d="M335.5 133 L338 135 L335.5 137" fill="none" stroke="#222" stroke-width="1.2"/>
<rect x="354.5" y="124.5" width="16" height="2.5" rx="1.2" fill="#e8e8e8" stroke="#222" stroke-width="0.9" stroke-dasharray="1 0.6"/>
<path d="M355 129.5 L356 128.5 L357 129.5 L358 128.5 L359 129.5 L360 128.5 L361 129.5" fill="none" stroke="#333" stroke-width="0.9"/>
<path d="M355 133 L356 132 L357 133 L358 132 L359 133 L360 132 L361 133" fill="none" stroke="#333" stroke-width="0.9"/>
<path d="M355 136.5 L356 135.5 L357 136.5 L358 135.5 L359 136.5 L360 135.5 L361 136.5" fill="none" stroke="#333" stroke-width="0.9"/>
<path d="M355 139 L356 138 L357 139 L358 138 L359 139 L360 138 L361 139" fill="none" stroke="#333" stroke-width="0.9"/>
<path d="M366 129 V139" stroke="#222" stroke-width="1" stroke-dasharray="1.2 0.8"/><path d="M363.5 131.5 L366 129 L368.5 131.5" fill="none" stroke="#222" stroke-width="1.2"/>
<rect x="848" y="126" width="13" height="3" fill="#000" />
<rect x="857" y="126" width="4" height="7" fill="#000" />
<rect x="848" y="131" width="8" height="1.3" fill="#000" />
<path d="M850 135.5 H857" stroke="#000" stroke-width="1.2" stroke-dasharray="1.3 1"/><path d="M857 133.0 L860 135.5 L857 138.0 Z" fill="#000"/>
<path d="M880 126.5 H887 Q892 126.5 892 132" fill="none" stroke="#000" stroke-width="1.5"/><path d="M880 130 H885 Q888 130 888 133" fill="none" stroke="#000" stroke-width="1.2"/>
<path d="M882 135.5 H889" stroke="#000" stroke-width="1.2" stroke-dasharray="1.3 1"/><path d="M889 133.0 L892 135.5 L889 138.0 Z" fill="#000"/>
<defs><linearGradient id="gmv" x1="0" y1="0" x2="1" y2="0"><stop offset="0" stop-color="#c8dcf0"/><stop offset="1" stop-color="#7a9ec8"/></linearGradient></defs>
<rect x="912" y="128" width="10" height="4" fill="url(#gmv)" />
<rect x="912" y="126" width="13" height="2" fill="#000" />
<rect x="922" y="126" width="3" height="7" fill="#000" />
<path d="M914 135.5 H921" stroke="#000" stroke-width="1.2" stroke-dasharray="1.3 1"/><path d="M921 133.0 L924 135.5 L921 138.0 Z" fill="#000"/>
<path d="M944 126 H957 V132 H955 V129 L952 131 L949.5 128.5 L947 131 L944 128.5 Z" fill="#000"/>
<path d="M946 130.5 L948 128.5 L950 130.5 L948 132.5 Z M951 130.5 L953 128.5 L955 130.5 L953 132.5 Z" fill="#000"/>
<path d="M946 135.5 H953" stroke="#000" stroke-width="1.2" stroke-dasharray="1.3 1"/><path d="M953 133.0 L956 135.5 L953 138.0 Z" fill="#000"/>
<defs>
<linearGradient id="gtw" x1="0" y1="0" x2="0" y2="1"><stop offset="0" stop-color="#555"/><stop offset="1" stop-color="#ddd"/></linearGradient>
<linearGradient id="gorange" x1="0" y1="0" x2="1" y2="1"><stop offset="0" stop-color="#ffd84a"/><stop offset="1" stop-color="#e88a00"/></linearGradient>
<linearGradient id="gpeach" x1="0" y1="0" x2="1" y2="1"><stop offset="0" stop-color="#fff0ea"/><stop offset="1" stop-color="#f0b090"/></linearGradient>
<linearGradient id="grect" x1="0" y1="0" x2="1" y2="1"><stop offset="0" stop-color="#ffffff"/><stop offset="1" stop-color="#8eaed4"/></linearGradient>
<linearGradient id="gbox" x1="0" y1="0" x2="1" y2="1"><stop offset="0" stop-color="#8080c8"/><stop offset="1" stop-color="#c0c0f0"/></linearGradient>
<radialGradient id="gell" cx="0.35" cy="0.3" r="0.8"><stop offset="0" stop-color="#ffffff"/><stop offset="1" stop-color="#ff9aa8"/></radialGradient>
<linearGradient id="gstar" x1="0" y1="0" x2="0" y2="1"><stop offset="0" stop-color="#fffbe0"/><stop offset="1" stop-color="#f0d848"/></linearGradient>
<linearGradient id="gpen" x1="0" y1="0" x2="1" y2="1"><stop offset="0" stop-color="#c8e4f4"/><stop offset="1" stop-color="#3a7aa8"/></linearGradient>
<linearGradient id="ggreen" x1="0" y1="0" x2="1" y2="1"><stop offset="0" stop-color="#a8e088"/><stop offset="1" stop-color="#3a9a1a"/></linearGradient>
<linearGradient id="ggrad" x1="0" y1="0" x2="1" y2="1"><stop offset="0" stop-color="#ffffff"/><stop offset="1" stop-color="#3aa84a"/></linearGradient>
<linearGradient id="gmesh" x1="0" y1="0" x2="1" y2="1"><stop offset="0" stop-color="#6aa8d0"/><stop offset="1" stop-color="#58b878"/></linearGradient>
</defs>
<rect x="4" y="153" width="29" height="29" fill="#c6c3be" />
<rect x="4" y="153" width="29" height="1" fill="#000" />
<rect x="4" y="153" width="1" height="29" fill="#000" />
<rect x="4" y="181" width="29" height="1" fill="#fff" />
<rect x="32" y="153" width="1" height="29" fill="#fff" />
<path d="M12 157.5 V175.5 L16 171.5 L19.5 178 L22 176.5 L18.5 170 L23.5 169.5 Z" fill="#000" stroke="#fff" stroke-width="1"/>
<path d="M8.5 206 Q9 193 12.5 191 Q18 187.5 27.5 187.5" fill="none" stroke="#666" stroke-width="1"/>
<rect x="10" y="188.5" width="5" height="5" fill="#8888e0" stroke="#1010f0" stroke-width="1.5"/>
<rect x="25.5" y="185.5" width="4" height="4" fill="#c8c8f8" stroke="#5050f8" stroke-width="1"/><rect x="6.5" y="204.5" width="4" height="4" fill="#c8c8f8" stroke="#5050f8" stroke-width="1"/>
<path d="M14 193.5 L27 202.5 L22.5 207 Z" fill="#000"/>
<path d="M8 230 Q12 229.5 14 224 Q17 216 22 216 Q28 216 28 222 Q28 226 24.5 226.5 Q21 226.5 21 223 Q21 228 28 230 V238 H8 Z" fill="url(#gtw)" stroke="#111" stroke-width="1"/>
<path d="M8 230 Q12 229.5 14 224 Q17 216 22 216 Q28 216 28 222 Q28 226 24.5 226.5 Q21 226.5 21 223 Q21 228 28 230" fill="none" stroke="#fff" stroke-width="0.6" transform="translate(0,1)"/>
<path d="M20.5 259.5 L27.5 266.5" stroke="#8a5a00" stroke-width="4.4" stroke-linecap="round"/><path d="M20.5 259.5 L27.5 266.5" stroke="url(#gorange)" stroke-width="3" stroke-linecap="round"/>
<circle cx="14" cy="253.5" r="7.2" fill="url(#glens)" stroke="#111" stroke-width="1.4"/>
<path d="M6.5 281.5 L16 275.5 L26 292 L16.5 299 Z" fill="url(#gpeach)" stroke="#111" stroke-width="1.3"/>
<path d="M9 283 L11 282 M10.5 285.5 L13.5 284 M12 288 L14 287 M13.5 290.5 L16.5 289 M15 293 L17 292 M16.5 295.5 L19.5 294" stroke="#222" stroke-width="0.9"/>
<rect x="8.5" y="307.5" width="19.5" height="19.5" fill="url(#grect)" stroke="#111" stroke-width="1.5"/>
<rect x="9.5" y="308.5" width="17.5" height="1" fill="#fff" />
<path d="M8.5 339 L19.5 335 L28.5 343 L27.5 355 L17 358.5 L8.5 352.5 Z" fill="url(#gbox)" stroke="#333" stroke-width="1"/>
<path d="M19.5 335 L18.5 349 L27.5 355 L28.5 343 Z" fill="#d8d8f8"/>
<path d="M8.5 352.5 L18.5 349 L27.5 355 L17 358.5 Z" fill="#4a4a9a"/>
<path d="M8.5 339 L19.5 335 L28.5 343 L27.5 355 L17 358.5 L8.5 352.5 Z" fill="none" stroke="#333" stroke-width="1"/>
<circle cx="18" cy="377.5" r="9.3" fill="url(#gell)" stroke="#111" stroke-width="1.3"/>
<path d="M7 402 L14 397 L20.5 401.5 L19 409 L10.5 411 Z" fill="url(#gstar)" stroke="#222" stroke-width="1"/>
<path d="M20.5 400.5 L22.5 406 L28.5 406.5 L24 410 L25.5 416 L20 412.5 L15 416 L16.5 410.5 L12 406.5 L18 406 Z" fill="url(#gstar)" stroke="#222" stroke-width="1"/>
<path d="M17 438 Q17.5 436 19 437 Q21 439 19 441 Q16 443 14 440 Q12 436 15 433.5 Q19 431 22.5 434 Q26 438 23 443 Q19 448 13 446 Q7 443 7.5 436 Q8.5 427 17 426.5 Q26 426.5 28.5 434 Q30 440 27 446" fill="none" stroke="#111" stroke-width="1.3"/>
<path d="M8 456 H12 L8 467 Q12 461 14 465 Q15 470 14 474 Q15 479 21 478.5 Q26 478 27 473" fill="none" stroke="#111" stroke-width="1.1"/>
<path d="M21 456 L28.5 461 L23 472 L17.5 477.5 L17 468 Z" fill="url(#gorange)" stroke="#222" stroke-width="1"/>
<path d="M17 468 L23 472 L17.5 477.5 Z" fill="#fff4d8" stroke="#222" stroke-width="0.8"/><path d="M17.3 475 L18.8 476 L17.5 477.5 Z" fill="#000"/>
<path d="M8 486 H20 M9 486 Q17 492 15 500 Q13 506 9 506" fill="none" stroke="#222" stroke-width="1"/>
<path d="M21 486 L29 491 L26 497 L19 494 Z" fill="url(#gpen)" stroke="#333" stroke-width="0.8"/>
<path d="M19 494 L24 496.5 L20 500 L17.5 507 L16.5 505 L17 499 Z" fill="#f4d040" stroke="#333" stroke-width="0.8"/>
<rect x="6.5" y="504" width="4.5" height="4.5" fill="#fff" stroke="#111" stroke-width="1"/><circle cx="18.5" cy="507" r="1.5" fill="#fff" stroke="#111" stroke-width="0.8"/><path d="M11 506.5 H17" stroke="#111" stroke-width="0.8"/>
<path d="M13.5 516 Q8 521 9 530 Q10 537 16 538 Q21 538.5 24 535.5 Q28 533 30 534 Q24 533 20 536 Q15 537 13 531 Q11 524 15 516 Z" fill="#111"/>
<path d="M20 516 L29.5 518.5 L27 524 L18 521 Z" fill="#6aa0c8" stroke="#333" stroke-width="0.8"/>
<path d="M18 521 L26 524 L22 531 L17 535 L17.5 527 Z" fill="#f4c030" stroke="#222" stroke-width="0.9"/>
<text x="7" y="567" font-family="Liberation Sans" font-weight="bold" font-size="24" fill="#111" textLength="20" lengthAdjust="spacingAndGlyphs">A</text>
<path d="M27.5 547 V566.5 M25 546.5 H30 M25 567 H30" stroke="#000" stroke-width="1" fill="none"/>
<circle cx="11" cy="577" r="1" fill="#111"/>
<circle cx="13" cy="580" r="1" fill="#111"/>
<circle cx="9.5" cy="582" r="1" fill="#111"/>
<circle cx="11.5" cy="585" r="1" fill="#111"/>
<circle cx="14" cy="583" r="1" fill="#111"/>
<circle cx="16" cy="579" r="1" fill="#111"/>
<circle cx="15" cy="586" r="1" fill="#111"/>
<path d="M19.5 586 L27 583 L30 594 L24 598 Q19 597 18 593 Z" fill="url(#ggreen)" stroke="#222" stroke-width="0.9"/>
<rect x="20" y="580" width="6" height="4.5" fill="#f4d060" stroke="#222" stroke-width="0.8" transform="rotate(-20 23 582)"/>
<path d="M8 621.5 L17.5 605 L26.5 611 L17.5 627.5 Z" fill="url(#gpeach)" stroke="#111" stroke-width="1.4"/>
<ellipse cx="17.5" cy="657" rx="10.5" ry="2.5" fill="#90d890" stroke="#222" stroke-width="0.9"/>
<path d="M10.5 643 L23 636.5 Q28 642 29 646 L17.5 651.5 Z" fill="url(#gpen)" stroke="#222" stroke-width="1"/>
<path d="M10.5 643 Q13 650 17.5 651.5 L14 654 Q12 655 13 657" fill="#70c070" stroke="#222" stroke-width="0.8"/>
<path d="M14 636 L17 646" stroke="#222" stroke-width="1"/>
<rect x="7" y="666" width="21.5" height="22" fill="url(#ggrad)"/>
<path d="M12 671.5 L24 682.5" stroke="#222" stroke-width="1.3"/>
<rect x="9.5" y="669.5" width="4" height="4" fill="#fff" stroke="#111" stroke-width="1.3"/><rect x="22.5" y="680.5" width="4" height="4" fill="#fff" stroke="#111" stroke-width="1.3"/>
<path d="M10.5 699.5 Q18 703 25.5 699.5 Q22 707 25.5 714 Q18 711 10.5 714 Q14 707 10.5 699.5 Z" fill="url(#gmesh)" stroke="#444" stroke-width="0.8"/>
<rect x="8.5" y="697.5" width="4" height="4" fill="#fff" stroke="#111" stroke-width="1.3"/>
<rect x="23.5" y="697.5" width="4" height="4" fill="#fff" stroke="#111" stroke-width="1.3"/>
<rect x="8.5" y="712" width="4" height="4" fill="#fff" stroke="#111" stroke-width="1.3"/>
<rect x="23.5" y="712" width="4" height="4" fill="#fff" stroke="#111" stroke-width="1.3"/>
<path d="M11 746 L22 733" stroke="#333" stroke-width="2.6"/><path d="M11.3 745.5 L22 733" stroke="#c8dcf0" stroke-width="1.2"/>
<path d="M21 731 L25.5 735.5" stroke="#111" stroke-width="2.8"/><circle cx="26.5" cy="727.5" r="2.6" fill="#111"/><path d="M22.5 733 L27 729" stroke="#111" stroke-width="3"/>
<ellipse cx="10" cy="748" rx="1.3" ry="1.8" fill="#6a9acc" stroke="#345" stroke-width="0.5"/>
<path d="M15.5 763 L10 775 M19 760 H25 V775" fill="none" stroke="#111" stroke-width="1"/>
<rect x="11.5" y="755.5" width="8" height="7" fill="url(#gblue)" stroke="#111" stroke-width="1"/>
<rect x="14.5" y="764.5" width="7.5" height="4.5" fill="#f4c820" stroke="#111" stroke-width="1"/>
<rect x="6.5" y="771.5" width="7.5" height="7" fill="url(#gblue)" stroke="#111" stroke-width="1"/><rect x="21.5" y="771.5" width="7.5" height="7" fill="url(#gblue)" stroke="#111" stroke-width="1"/>
<path d="M42.3 158.5 V156.8 Q42.3 153.5 45 153.5 Q47.7 153.5 47.7 156.8 V158.5" fill="none" stroke="#333" stroke-width="1.1"/>
<rect x="40.5" y="157.5" width="9" height="6" fill="url(#gyel)" stroke="#3a3010" stroke-width="1"/>
<rect x="44.5" y="159.5" width="1.2" height="2.2" fill="#333" />
<rect x="883" y="160.5" width="7" height="7" fill="url(#gyel)" stroke="#886600" stroke-width="0.8"/>
<path d="M890 155.5 H897.5 V157.5 L896 159 H895 V166.5 H896 L897.5 168 V170.5 H890 V168 L891.5 166.5 H892.5 V159 H891.5 L890 157.5 Z" fill="#f0f0f0" stroke="#111" stroke-width="1"/>
<defs><linearGradient id="gfh" x1="0" y1="0" x2="1" y2="0"><stop offset="0" stop-color="#000"/><stop offset="0.4" stop-color="#000"/><stop offset="1" stop-color="#c8c8c8"/></linearGradient><linearGradient id="gfv" x1="0" y1="0" x2="0" y2="1"><stop offset="0" stop-color="#000"/><stop offset="0.4" stop-color="#000"/><stop offset="1" stop-color="#c8c8c8"/></linearGradient></defs>
<rect x="703" y="88" width="16" height="2" fill="url(#gfh)"/><rect x="703" y="88" width="2" height="16" fill="url(#gfv)"/>
<path d="M705 90 H716.5 L705 101.5 Z" fill="#fff"/>
<path d="M703 104 L709 99 L717 90.5 L719 88.5 V96 L715 99 L711 102.5 L707 104 Z" fill="#0a0a0a"/>
<path d="M707 101.5 L715 93.5" stroke="#9a9a9a" stroke-width="0.8" stroke-dasharray="1 1"/>
<path d="M716.2 92.5 L719 90 V96.5 L717.5 96 Z" fill="#f6b418"/>
<rect x="882" y="377" width="16" height="2" fill="url(#gfh)"/><rect x="882" y="377" width="2" height="16" fill="url(#gfv)"/>
<path d="M884 379 H895.5 L884 390.5 Z" fill="#fff"/>
<path d="M882 393 L888 388 L896 379.5 L898 377.5 V385 L894 388 L890 391.5 L886 393 Z" fill="#0a0a0a"/>
<path d="M886 390.5 L894 382.5" stroke="#9a9a9a" stroke-width="0.8" stroke-dasharray="1 1"/>
<path d="M895.2 381.5 L898 379 V385.5 L896.5 385 Z" fill="#f6b418"/>
<rect x="887" y="848" width="16" height="2" fill="url(#gfh)"/><rect x="887" y="848" width="2" height="16" fill="url(#gfv)"/>
<path d="M889 850 H900.5 L889 861.5 Z" fill="#fff"/>
<path d="M887 864 L893 859 L901 850.5 L903 848.5 V856 L899 859 L895 862.5 L891 864 Z" fill="#0a0a0a"/>
<path d="M891 861.5 L899 853.5" stroke="#9a9a9a" stroke-width="0.8" stroke-dasharray="1 1"/>
<path d="M900.2 852.5 L903 850 V856.5 L901.5 856 Z" fill="#f6b418"/>
<rect x="887" y="800" width="1" height="16" fill="#d01010" />
<rect x="889.5" y="800.5" width="6" height="4" fill="#b8cfe8" stroke="#111" stroke-width="1"/><rect x="889.5" y="805.5" width="13.5" height="4" fill="#b8cfe8" stroke="#111" stroke-width="1"/><rect x="889.5" y="811.5" width="10.5" height="4" fill="#b8cfe8" stroke="#111" stroke-width="1"/>
<path d="M887.5 824.5 H895 L898.5 828 V839.5 H887.5 Z" fill="url(#gpaper)" stroke="#111" stroke-width="1"/><path d="M895 824.5 V828 H898.5" fill="none" stroke="#111"/>
<path d="M892 832.5 H900" stroke="#000" stroke-width="1.2"/><path d="M899 829.5 L903 832.5 L899 835.5 Z" fill="#000"/>
<path d="M882 878 H898 V882.5 L896.5 882.5 Q896 880 893 880 H891.5 V891 Q891.5 892.2 893.5 892.2 V893.5 H886.5 V892.2 Q888.5 892.2 888.5 891 V880 H887 Q884 880 883.5 882.5 L882 882.5 Z" fill="#000"/>
<rect x="1193" y="114" width="3" height="31" fill="#dcdad5" />
<rect x="1193" y="114" width="1" height="31" fill="#fff" />
<rect x="1195" y="114" width="1" height="31" fill="#8a8884" />
<rect x="1193" y="145" width="3" height="1" fill="#000" />
<rect x="868" y="150" width="13" height="1" fill="#fff" />
</svg>
</body></html>
